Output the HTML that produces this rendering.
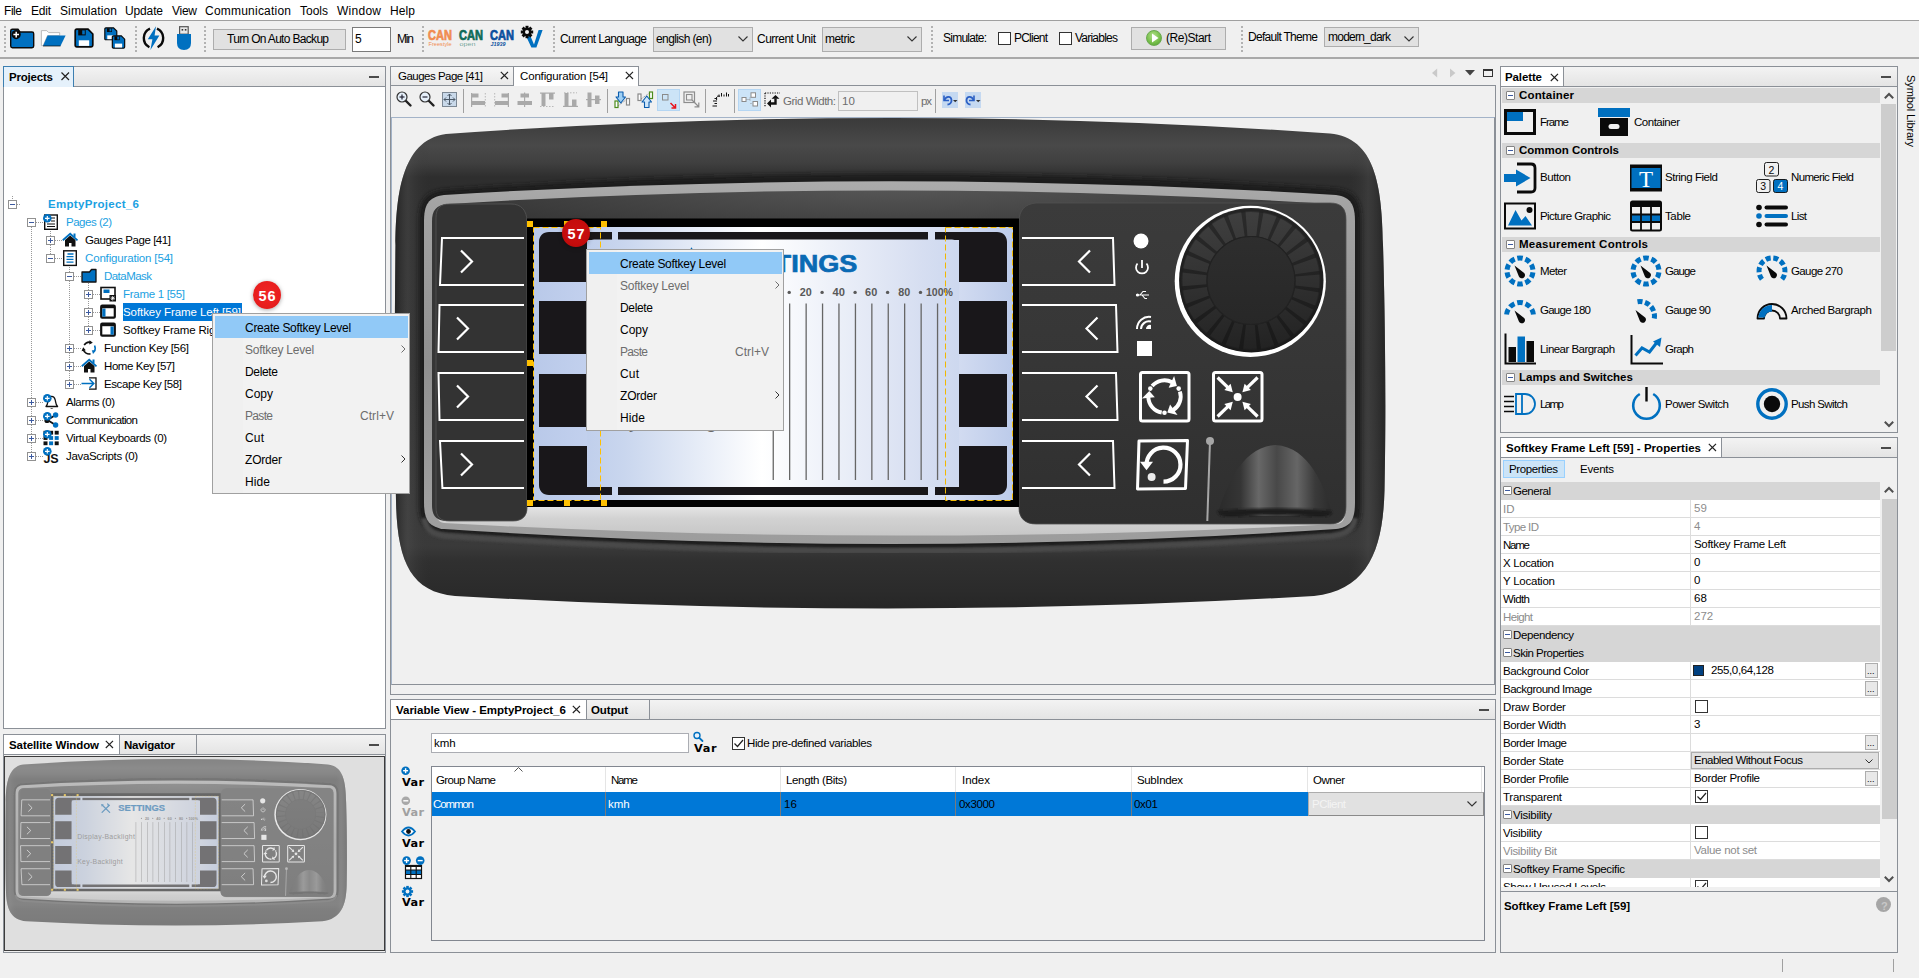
<!DOCTYPE html>
<html lang="en">
<head>
<meta charset="utf-8">
<title>HMI Designer - EmptyProject_6</title>
<style>
*{box-sizing:border-box;margin:0;padding:0}
html,body{width:1919px;height:978px;overflow:hidden;background:#f0f0f0;font-family:"Liberation Sans",sans-serif;font-size:11px;color:#000}
.a{position:absolute}
.t{position:absolute;white-space:pre}
.panel{position:absolute;border:1px solid #8b9097;background:#f0f0f0}
.hdr{position:absolute;left:0;top:0;right:0;height:20px;background:linear-gradient(#f3f3f3,#e4e4e4);border-bottom:1px solid #8b9097}
.tab{position:absolute;top:0;height:20px;background:#fff;border-right:1px solid #8b9097}
.grip{position:absolute;width:2px;top:26px;height:27px;background-image:linear-gradient(#b2b2b2 50%,transparent 50%);background-size:2px 4px}
.btn{position:absolute;background:#e1e1e1;border:1px solid #adadad}
.inp{position:absolute;background:#fff;border:1px solid #7a7a7a}
.cb{position:absolute;width:13px;height:13px;background:#fff;border:1px solid #333}
svg{position:absolute;overflow:visible}
</style>
</head>
<body>

<!-- top -->
<div class="sec" id="sec-top">
<div class="a" style="left:0;top:0;width:1919px;height:20px;background:#fff"></div>
<span class="t" style="letter-spacing:-0.45px;left:4px;top:5px;font-size:12px;line-height:12px;color:#000;">File</span>
<span class="t" style="letter-spacing:-0.23px;left:31px;top:5px;font-size:12px;line-height:12px;color:#000;">Edit</span>
<span class="t" style="letter-spacing:0.11px;left:60px;top:5px;font-size:12px;line-height:12px;color:#000;">Simulation</span>
<span class="t" style="letter-spacing:-0.14px;left:125px;top:5px;font-size:12px;line-height:12px;color:#000;">Update</span>
<span class="t" style="letter-spacing:-0.27px;left:172px;top:5px;font-size:12px;line-height:12px;color:#000;">View</span>
<span class="t" style="letter-spacing:0.22px;left:205px;top:5px;font-size:12px;line-height:12px;color:#000;">Communication</span>
<span class="t" style="letter-spacing:-0.0px;left:300px;top:5px;font-size:12px;line-height:12px;color:#000;">Tools</span>
<span class="t" style="letter-spacing:0.26px;left:337px;top:5px;font-size:12px;line-height:12px;color:#000;">Window</span>
<span class="t" style="letter-spacing:0.1px;left:390px;top:5px;font-size:12px;line-height:12px;color:#000;">Help</span>
<div class="a" style="left:0;top:20px;width:1919px;height:1px;background:#a0a0a0"></div>
<div class="a" style="left:0;top:21px;width:1919px;height:36px;background:#f0f0f0"></div>
<div class="a" style="left:0;top:57px;width:1919px;height:2px;background:#a9a9a9"></div>
<div class="grip" style="left:4px"></div>
<div class="grip" style="left:135px"></div>
<div class="grip" style="left:204px"></div>
<div class="grip" style="left:422px"></div>
<div class="grip" style="left:553px"></div>
<div class="grip" style="left:931px"></div>
<div class="grip" style="left:1241px"></div>
<div class="btn" style="left:213px;top:29px;width:133px;height:21px"></div>
<span class="t" style="letter-spacing:-0.68px;left:227px;top:33px;font-size:12px;line-height:12px;color:#000;">Turn On Auto Backup</span>
<div class="inp" style="left:352px;top:27px;width:39px;height:25px"></div>
<span class="t" style="left:355px;top:33px;font-size:12px;line-height:12px;color:#000;">5</span>
<span class="t" style="letter-spacing:-1.17px;left:397px;top:33px;font-size:12px;line-height:12px;color:#000;">Min</span>
<span class="t" style="letter-spacing:-0.65px;left:560px;top:33px;font-size:12px;line-height:12px;color:#000;">Current Language</span>
<div class="btn" style="left:653px;top:27px;width:100px;height:25px"></div>
<span class="t" style="letter-spacing:-0.61px;left:656px;top:33px;font-size:12px;line-height:12px;color:#000;">english (en)</span>
<span class="t" style="letter-spacing:-0.52px;left:757px;top:33px;font-size:12px;line-height:12px;color:#000;">Current Unit</span>
<div class="btn" style="left:822px;top:27px;width:100px;height:25px"></div>
<span class="t" style="letter-spacing:-0.53px;left:825px;top:33px;font-size:12px;line-height:12px;color:#000;">metric</span>
<span class="t" style="letter-spacing:-0.75px;left:943px;top:32px;font-size:12px;line-height:12px;color:#000;">Simulate:</span>
<div class="cb" style="left:998px;top:32px"></div>
<span class="t" style="letter-spacing:-0.78px;left:1014px;top:32px;font-size:12px;line-height:12px;color:#000;">PClient</span>
<div class="cb" style="left:1059px;top:32px"></div>
<span class="t" style="letter-spacing:-0.77px;left:1075px;top:32px;font-size:12px;line-height:12px;color:#000;">Variables</span>
<div class="btn" style="left:1131px;top:27px;width:95px;height:23px"></div>
<span class="t" style="letter-spacing:-0.46px;left:1166px;top:32px;font-size:12px;line-height:12px;color:#000;">(Re)Start</span>
<span class="t" style="letter-spacing:-0.71px;left:1248px;top:31px;font-size:12px;line-height:12px;color:#000;">Default Theme</span>
<div class="btn" style="left:1324px;top:27px;width:95px;height:20px"></div>
<span class="t" style="letter-spacing:-0.77px;left:1328px;top:31px;font-size:12px;line-height:12px;color:#000;">modern_dark</span>
<svg style="left:738px;top:36px" width="10" height="6"><path d="M0.5 0.5 L5 5 L9.5 0.5" fill="none" stroke="#333" stroke-width="1.1"/></svg>
<svg style="left:907px;top:36px" width="10" height="6"><path d="M0.5 0.5 L5 5 L9.5 0.5" fill="none" stroke="#333" stroke-width="1.1"/></svg>
<svg style="left:1404px;top:36px" width="10" height="6"><path d="M0.5 0.5 L5 5 L9.5 0.5" fill="none" stroke="#333" stroke-width="1.1"/></svg>
</div>
<!-- tbicons -->
<div class="sec" id="sec-tbicons">
<svg style="left:9px;top:27px" width="26" height="22" viewBox="0 0 26 22"><path d="M1.7 4 Q1.7 2.3 3.4 2.3 H9 L11 5 H23 Q24.7 5 24.7 6.7 V19 Q24.7 20.7 23 20.7 H3.4 Q1.7 20.7 1.7 19 Z" fill="#0070c0" stroke="#0a0a0a" stroke-width="1.4"/><circle cx="7.2" cy="7.6" r="4.6" fill="#0a0a0a"/><path d="M7.2 4.8 V10.4 M4.4 7.6 H10" stroke="#fff" stroke-width="1.5"/></svg>
<svg style="left:40px;top:29px" width="26" height="18" viewBox="0 0 26 18"><path d="M1.4 16.6 V1.6 H6.7 L8.7 3.6 H19.7 V6.6 H7.5 L3.2 16.6 Z" fill="#fff" stroke="#b4b4b4" stroke-width="0.9"/><path d="M7.6 6.6 H25.6 L20.5 16.9 H3 Z" fill="#0070c0"/><path d="M3 17 H20.5" stroke="#0a0a0a" stroke-width="0.7"/></svg>
<svg style="left:74px;top:28px" width="20" height="20" viewBox="0 0 20 20"><path d="M1.2 2.8 Q1.2 1.2 2.8 1.2 H14 L18.8 6 V17.2 Q18.8 18.8 17.2 18.8 H2.8 Q1.2 18.8 1.2 17.2 Z" fill="#0070c0" stroke="#0a0a0a" stroke-width="1.7"/><rect x="4.2" y="1.8" width="7.5" height="5.6" fill="#0a0a0a"/><rect x="8.2" y="2.4" width="2.6" height="4" fill="#0070c0"/><rect x="4.8" y="12.3" width="10.4" height="5.6" fill="#fff"/></svg>
<svg style="left:104px;top:27px" width="23" height="23" viewBox="0 0 23 23"><g transform="scale(0.68)"><path d="M1.2 2.8 Q1.2 1.2 2.8 1.2 H14 L18.8 6 V17.2 Q18.8 18.8 17.2 18.8 H2.8 Q1.2 18.8 1.2 17.2 Z" fill="#0070c0" stroke="#0a0a0a" stroke-width="1.7"/><rect x="4.2" y="1.8" width="7.5" height="5.6" fill="#0a0a0a"/><rect x="8.2" y="2.4" width="2.6" height="4" fill="#0070c0"/><rect x="4.8" y="12.3" width="10.4" height="5.6" fill="#fff"/></g><g transform="translate(7.5 8) scale(0.7)"><path d="M1.2 2.8 Q1.2 1.2 2.8 1.2 H14 L18.8 6 V17.2 Q18.8 18.8 17.2 18.8 H2.8 Q1.2 18.8 1.2 17.2 Z" fill="#0070c0" stroke="#0a0a0a" stroke-width="1.7"/><rect x="4.2" y="1.8" width="7.5" height="5.6" fill="#0a0a0a"/><rect x="8.2" y="2.4" width="2.6" height="4" fill="#0070c0"/><rect x="4.8" y="12.3" width="10.4" height="5.6" fill="#fff"/></g></svg>
<svg style="left:142px;top:26px" width="23" height="24" viewBox="0 0 23 24"><path d="M8 2.6 A10.3 10.3 0 0 0 7.4 21.2" fill="none" stroke="#0a0a0a" stroke-width="2.4"/><path d="M15 2.6 A10.3 10.3 0 0 1 15.6 21.2" fill="none" stroke="#0a0a0a" stroke-width="2.4"/><path d="M14 0.2 L5.8 13.2 H10.4 L8.4 24 L17.4 9.6 H12.6 Z" fill="#0070c0"/></svg>
<svg style="left:176px;top:26px" width="16" height="24" viewBox="0 0 16 24"><rect x="3.6" y="0.7" width="8.6" height="7.5" fill="#e8e8e8" stroke="#555" stroke-width="1.2"/><rect x="5.6" y="3" width="1.6" height="1.6" fill="#333"/><rect x="8.8" y="3" width="1.6" height="1.6" fill="#333"/><path d="M1 8 H15 V17 Q15 24 8 24 Q1 24 1 17 Z" fill="#0070c0"/></svg>
<div class="a" style="left:1146px;top:30px;width:16px;height:16px;border-radius:50%;background:radial-gradient(circle at 45% 35%,#b4e08c 0%,#78c04c 55%,#4c9a2c 100%);border:1px solid #6aa84f"></div>
<svg style="left:1151px;top:33px" width="8" height="10"><path d="M1 0.5 L7.5 5 L1 9.5 Z" fill="#fff"/></svg>
<svg style="left:0;top:0" width="600" height="60" viewBox="0 0 600 60"><text x="428" y="40.2" font-family="Liberation Sans, sans-serif" font-weight="bold" font-size="13.8" fill="#f08c50" textLength="24" lengthAdjust="spacingAndGlyphs" stroke="#f08c50" stroke-width="0.7">CAN</text><text x="428.6" y="45.8" font-family="Liberation Sans, sans-serif" font-size="5.6" fill="#f08c50" textLength="23" lengthAdjust="spacingAndGlyphs" >Freestyle</text><text x="459" y="40.2" font-family="Liberation Sans, sans-serif" font-weight="bold" font-size="13.8" fill="#0e6b58" textLength="24" lengthAdjust="spacingAndGlyphs" stroke="#0e6b58" stroke-width="0.7">CAN</text><text x="459.6" y="45.8" font-family="Liberation Sans, sans-serif" font-size="5.6" fill="#0e6b58" textLength="16" lengthAdjust="spacingAndGlyphs" fill-opacity="0.6">open</text><text x="490" y="40.2" font-family="Liberation Sans, sans-serif" font-weight="bold" font-size="13.8" fill="#0a4f9e" textLength="24" lengthAdjust="spacingAndGlyphs" stroke="#0a4f9e" stroke-width="0.7">CAN</text><text x="490.6" y="45.8" font-family="Liberation Sans, sans-serif" font-size="5.6" fill="#0a4f9e" textLength="15" lengthAdjust="spacingAndGlyphs" font-weight="bold" font-style="italic">J1939</text><path d="M526 36 L530.4 36 L534 44.5 L538.6 30 L542.6 30 L536.4 47.4 H531.4 Z" fill="#0070c0"/></svg>
<svg style="left:520px;top:25px" width="14" height="14" viewBox="-7 -7 14 14"><rect x="-1.5" y="-6.2" width="3" height="3.4" fill="#0a0a0a" transform="rotate(0)"/><rect x="-1.5" y="-6.2" width="3" height="3.4" fill="#0a0a0a" transform="rotate(45)"/><rect x="-1.5" y="-6.2" width="3" height="3.4" fill="#0a0a0a" transform="rotate(90)"/><rect x="-1.5" y="-6.2" width="3" height="3.4" fill="#0a0a0a" transform="rotate(135)"/><rect x="-1.5" y="-6.2" width="3" height="3.4" fill="#0a0a0a" transform="rotate(180)"/><rect x="-1.5" y="-6.2" width="3" height="3.4" fill="#0a0a0a" transform="rotate(225)"/><rect x="-1.5" y="-6.2" width="3" height="3.4" fill="#0a0a0a" transform="rotate(270)"/><rect x="-1.5" y="-6.2" width="3" height="3.4" fill="#0a0a0a" transform="rotate(315)"/><circle r="4.3" fill="#0a0a0a"/><circle r="2" fill="#f0f0f0"/></svg>
</div>
<!-- left -->
<div class="sec" id="sec-left">
<div class="panel" style="left:3px;top:66px;width:383px;height:663px;border-color:#8b9097;background:#fff"><div class="hdr"><div class="tab" style="left:0;width:71px;background:#e5f1fb;border:1px solid #3c7fb1;border-bottom:none;top:-1px;left:-1px;height:21px"></div></div></div>
<span class="t" style="letter-spacing:-0.2px;left:9px;top:72px;font-size:11.5px;line-height:11.5px;color:#000;font-weight:bold;">Projects</span>
<svg style="left:61px;top:72px" width="9" height="9"><path d="M0.5 0.5 L8 8 M8 0.5 L0.5 8" stroke="#222" stroke-width="1.2"/></svg>
<div class="a" style="left:369px;top:76px;width:10px;height:2px;background:#4a4a4a"></div>
<div class="a" style="left:12px;top:196px;width:1px;height:4px;background-image:linear-gradient(#999 50%,transparent 50%);background-size:1px 2px"></div>
<div class="a" style="left:31px;top:227px;width:1px;height:229px;background-image:linear-gradient(#999 50%,transparent 50%);background-size:1px 2px"></div>
<div class="a" style="left:50px;top:227px;width:1px;height:31px;background-image:linear-gradient(#999 50%,transparent 50%);background-size:1px 2px"></div>
<div class="a" style="left:69px;top:263px;width:1px;height:121px;background-image:linear-gradient(#999 50%,transparent 50%);background-size:1px 2px"></div>
<div class="a" style="left:88px;top:281px;width:1px;height:49px;background-image:linear-gradient(#999 50%,transparent 50%);background-size:1px 2px"></div>
<div class="a" style="left:123px;top:303px;width:119px;height:18px;background:#0078d7"></div>
<div class="a" style="left:17px;top:204px;width:3px;height:1px;background-image:linear-gradient(90deg,#999 50%,transparent 50%);background-size:2px 1px"></div>
<div class="a" style="left:8px;top:200px;width:9px;height:9px;border:1px solid #919191;background:#fff"></div>
<div class="a" style="left:10px;top:204px;width:5px;height:1px;background:#3c5aa0"></div>
<span class="t" style="letter-spacing:0.31px;left:48px;top:199px;font-size:11.5px;line-height:11.5px;color:#1ba1e2;font-weight:bold;">EmptyProject_6</span>
<div class="a" style="left:36px;top:222px;width:7px;height:1px;background-image:linear-gradient(90deg,#999 50%,transparent 50%);background-size:2px 1px"></div>
<div class="a" style="left:27px;top:218px;width:9px;height:9px;border:1px solid #919191;background:#fff"></div>
<div class="a" style="left:29px;top:222px;width:5px;height:1px;background:#3c5aa0"></div>
<span class="t" style="letter-spacing:-0.48px;left:66px;top:217px;font-size:11.5px;line-height:11.5px;color:#1ba1e2;">Pages (2)</span>
<div class="a" style="left:55px;top:240px;width:7px;height:1px;background-image:linear-gradient(90deg,#999 50%,transparent 50%);background-size:2px 1px"></div>
<div class="a" style="left:46px;top:236px;width:9px;height:9px;border:1px solid #919191;background:#fff"></div>
<div class="a" style="left:48px;top:240px;width:5px;height:1px;background:#3c5aa0"></div>
<div class="a" style="left:50px;top:238px;width:1px;height:5px;background:#3c5aa0"></div>
<span class="t" style="letter-spacing:-0.45px;left:85px;top:235px;font-size:11.5px;line-height:11.5px;color:#000;">Gauges Page [41]</span>
<div class="a" style="left:55px;top:258px;width:7px;height:1px;background-image:linear-gradient(90deg,#999 50%,transparent 50%);background-size:2px 1px"></div>
<div class="a" style="left:46px;top:254px;width:9px;height:9px;border:1px solid #919191;background:#fff"></div>
<div class="a" style="left:48px;top:258px;width:5px;height:1px;background:#3c5aa0"></div>
<span class="t" style="letter-spacing:-0.16px;left:85px;top:253px;font-size:11.5px;line-height:11.5px;color:#1ba1e2;">Configuration [54]</span>
<div class="a" style="left:74px;top:276px;width:7px;height:1px;background-image:linear-gradient(90deg,#999 50%,transparent 50%);background-size:2px 1px"></div>
<div class="a" style="left:65px;top:272px;width:9px;height:9px;border:1px solid #919191;background:#fff"></div>
<div class="a" style="left:67px;top:276px;width:5px;height:1px;background:#3c5aa0"></div>
<span class="t" style="letter-spacing:-0.54px;left:104px;top:271px;font-size:11.5px;line-height:11.5px;color:#1ba1e2;">DataMask</span>
<div class="a" style="left:93px;top:294px;width:7px;height:1px;background-image:linear-gradient(90deg,#999 50%,transparent 50%);background-size:2px 1px"></div>
<div class="a" style="left:84px;top:290px;width:9px;height:9px;border:1px solid #919191;background:#fff"></div>
<div class="a" style="left:86px;top:294px;width:5px;height:1px;background:#3c5aa0"></div>
<div class="a" style="left:88px;top:292px;width:1px;height:5px;background:#3c5aa0"></div>
<span class="t" style="letter-spacing:-0.29px;left:123px;top:289px;font-size:11.5px;line-height:11.5px;color:#1ba1e2;">Frame 1 [55]</span>
<div class="a" style="left:93px;top:312px;width:7px;height:1px;background-image:linear-gradient(90deg,#999 50%,transparent 50%);background-size:2px 1px"></div>
<div class="a" style="left:84px;top:308px;width:9px;height:9px;border:1px solid #919191;background:#fff"></div>
<div class="a" style="left:86px;top:312px;width:5px;height:1px;background:#3c5aa0"></div>
<div class="a" style="left:88px;top:310px;width:1px;height:5px;background:#3c5aa0"></div>
<span class="t" style="letter-spacing:-0.07px;left:123px;top:307px;font-size:11.5px;line-height:11.5px;color:#fff;">Softkey Frame Left [59]</span>
<div class="a" style="left:93px;top:330px;width:7px;height:1px;background-image:linear-gradient(90deg,#999 50%,transparent 50%);background-size:2px 1px"></div>
<div class="a" style="left:84px;top:326px;width:9px;height:9px;border:1px solid #919191;background:#fff"></div>
<div class="a" style="left:86px;top:330px;width:5px;height:1px;background:#3c5aa0"></div>
<div class="a" style="left:88px;top:328px;width:1px;height:5px;background:#3c5aa0"></div>
<span class="t" style="letter-spacing:-0.18px;left:123px;top:325px;font-size:11.5px;line-height:11.5px;color:#000;">Softkey Frame Right [60]</span>
<div class="a" style="left:74px;top:348px;width:7px;height:1px;background-image:linear-gradient(90deg,#999 50%,transparent 50%);background-size:2px 1px"></div>
<div class="a" style="left:65px;top:344px;width:9px;height:9px;border:1px solid #919191;background:#fff"></div>
<div class="a" style="left:67px;top:348px;width:5px;height:1px;background:#3c5aa0"></div>
<div class="a" style="left:69px;top:346px;width:1px;height:5px;background:#3c5aa0"></div>
<span class="t" style="letter-spacing:-0.28px;left:104px;top:343px;font-size:11.5px;line-height:11.5px;color:#000;">Function Key [56]</span>
<div class="a" style="left:74px;top:366px;width:7px;height:1px;background-image:linear-gradient(90deg,#999 50%,transparent 50%);background-size:2px 1px"></div>
<div class="a" style="left:65px;top:362px;width:9px;height:9px;border:1px solid #919191;background:#fff"></div>
<div class="a" style="left:67px;top:366px;width:5px;height:1px;background:#3c5aa0"></div>
<div class="a" style="left:69px;top:364px;width:1px;height:5px;background:#3c5aa0"></div>
<span class="t" style="letter-spacing:-0.42px;left:104px;top:361px;font-size:11.5px;line-height:11.5px;color:#000;">Home Key [57]</span>
<div class="a" style="left:74px;top:384px;width:7px;height:1px;background-image:linear-gradient(90deg,#999 50%,transparent 50%);background-size:2px 1px"></div>
<div class="a" style="left:65px;top:380px;width:9px;height:9px;border:1px solid #919191;background:#fff"></div>
<div class="a" style="left:67px;top:384px;width:5px;height:1px;background:#3c5aa0"></div>
<div class="a" style="left:69px;top:382px;width:1px;height:5px;background:#3c5aa0"></div>
<span class="t" style="letter-spacing:-0.41px;left:104px;top:379px;font-size:11.5px;line-height:11.5px;color:#000;">Escape Key [58]</span>
<div class="a" style="left:36px;top:402px;width:7px;height:1px;background-image:linear-gradient(90deg,#999 50%,transparent 50%);background-size:2px 1px"></div>
<div class="a" style="left:27px;top:398px;width:9px;height:9px;border:1px solid #919191;background:#fff"></div>
<div class="a" style="left:29px;top:402px;width:5px;height:1px;background:#3c5aa0"></div>
<div class="a" style="left:31px;top:400px;width:1px;height:5px;background:#3c5aa0"></div>
<span class="t" style="letter-spacing:-0.45px;left:66px;top:397px;font-size:11.5px;line-height:11.5px;color:#000;">Alarms (0)</span>
<div class="a" style="left:36px;top:420px;width:7px;height:1px;background-image:linear-gradient(90deg,#999 50%,transparent 50%);background-size:2px 1px"></div>
<div class="a" style="left:27px;top:416px;width:9px;height:9px;border:1px solid #919191;background:#fff"></div>
<div class="a" style="left:29px;top:420px;width:5px;height:1px;background:#3c5aa0"></div>
<div class="a" style="left:31px;top:418px;width:1px;height:5px;background:#3c5aa0"></div>
<span class="t" style="letter-spacing:-0.66px;left:66px;top:415px;font-size:11.5px;line-height:11.5px;color:#000;">Communication</span>
<div class="a" style="left:36px;top:438px;width:7px;height:1px;background-image:linear-gradient(90deg,#999 50%,transparent 50%);background-size:2px 1px"></div>
<div class="a" style="left:27px;top:434px;width:9px;height:9px;border:1px solid #919191;background:#fff"></div>
<div class="a" style="left:29px;top:438px;width:5px;height:1px;background:#3c5aa0"></div>
<div class="a" style="left:31px;top:436px;width:1px;height:5px;background:#3c5aa0"></div>
<span class="t" style="letter-spacing:-0.34px;left:66px;top:433px;font-size:11.5px;line-height:11.5px;color:#000;">Virtual Keyboards (0)</span>
<div class="a" style="left:36px;top:456px;width:7px;height:1px;background-image:linear-gradient(90deg,#999 50%,transparent 50%);background-size:2px 1px"></div>
<div class="a" style="left:27px;top:452px;width:9px;height:9px;border:1px solid #919191;background:#fff"></div>
<div class="a" style="left:29px;top:456px;width:5px;height:1px;background:#3c5aa0"></div>
<div class="a" style="left:31px;top:454px;width:1px;height:5px;background:#3c5aa0"></div>
<span class="t" style="letter-spacing:-0.33px;left:66px;top:451px;font-size:11.5px;line-height:11.5px;color:#000;">JavaScripts (0)</span>
</div>
<!-- treeicons -->
<div class="sec" id="sec-treeicons">
<svg style="left:43px;top:214px" width="16" height="16" viewBox="0 0 16 16"><rect x="1.7" y="1" width="12.6" height="14.3" fill="#fff" stroke="#111" stroke-width="1.4"/><path d="M8 4 H12 M8 7 H12 M4 10 H12 M4 12.5 H12" stroke="#111" stroke-width="1.2"/><circle cx="4.3" cy="4.3" r="4.3" fill="#0070c0"/><path d="M4.3 2 V6.6 M2 4.3 H6.6" stroke="#fff" stroke-width="1.15"/></svg>
<svg style="left:62px;top:232px" width="16" height="16" viewBox="0 0 16 16"><path d="M3 8 V14.5 H7 V11 H9.5 V14.5 H13.5 V8 L8.2 3.5 Z" fill="#111"/><path d="M0.8 8.3 L8.2 1.8 L15.5 8.3" fill="none" stroke="#0070c0" stroke-width="1.8"/><rect x="11.5" y="1.5" width="2" height="3.5" fill="#0070c0"/></svg>
<svg style="left:81px;top:358px" width="16" height="16" viewBox="0 0 16 16"><path d="M3 8 V14.5 H7 V11 H9.5 V14.5 H13.5 V8 L8.2 3.5 Z" fill="#111"/><path d="M0.8 8.3 L8.2 1.8 L15.5 8.3" fill="none" stroke="#0070c0" stroke-width="1.8"/><rect x="11.5" y="1.5" width="2" height="3.5" fill="#0070c0"/></svg>
<svg style="left:62px;top:250px" width="16" height="16" viewBox="0 0 16 16"><rect x="1.7" y="0.8" width="12.6" height="14.6" fill="#fff" stroke="#111" stroke-width="1.4"/><path d="M5.5 4 H11.5 M4.5 6.7 H11.5 M4.5 9.4 H11.5 M4.5 12.1 H11.5" stroke="#0070c0" stroke-width="1.3"/></svg>
<svg style="left:81px;top:268px" width="16" height="16" viewBox="0 0 16 16"><path d="M1 4 H8.5 L10.5 1.5 H15 V14 H1 Z" fill="#0070c0" stroke="#111" stroke-width="1.3" stroke-linejoin="round"/></svg>
<svg style="left:100px;top:286px" width="16" height="16" viewBox="0 0 16 16"><rect x="1" y="1.5" width="14" height="11.5" fill="#fff" stroke="#111" stroke-width="1.6"/><rect x="3.5" y="3.5" width="6" height="3.5" fill="#0070c0"/><rect x="9.5" y="9" width="6.5" height="6.5" fill="#111"/><path d="M12.7 10 V14.5 M10.5 12.2 H15 M11.2 10.7 L14.3 13.8 M14.3 10.7 L11.2 13.8" stroke="#fff" stroke-width="0.8"/></svg>
<svg style="left:100px;top:304px" width="16" height="16" viewBox="0 0 16 16"><rect x="1.2" y="1.7" width="13.6" height="12" rx="1" fill="#fff" stroke="#111" stroke-width="2.2"/><rect x="2.3" y="4.5" width="3.2" height="8.2" fill="#0070c0"/><rect x="1.2" y="1.2" width="13.6" height="3" fill="#111"/></svg>
<svg style="left:100px;top:322px" width="16" height="16" viewBox="0 0 16 16"><rect x="1.2" y="1.7" width="13.6" height="12" rx="1" fill="#fff" stroke="#111" stroke-width="2.2"/><rect x="10.5" y="4.5" width="3.2" height="8.2" fill="#0070c0"/><rect x="1.2" y="1.2" width="13.6" height="3" fill="#111"/></svg>
<svg style="left:81px;top:340px" width="16" height="16" viewBox="0 0 16 16"><path d="M3.2 5.2 A6 6 0 0 1 10 2.4" fill="none" stroke="#111" stroke-width="1.6"/><path d="M8.5 0.3 L11.8 2.8 L8.2 4.6 Z" fill="#111"/><path d="M13.6 5.5 A6 6 0 0 1 12.8 11.8" fill="none" stroke="#0070c0" stroke-width="1.6"/><path d="M15 10.5 L12 14 L10.8 10.3 Z" fill="#0070c0"/><path d="M9.5 13.8 A6 6 0 0 1 2.3 9.5" fill="none" stroke="#111" stroke-width="1.6"/><path d="M0.5 11.2 L2.2 7.2 L4.8 10.3 Z" fill="#111"/></svg>
<svg style="left:81px;top:376px" width="16" height="16" viewBox="0 0 16 16"><path d="M8 1.8 H15 V13.2 H8" fill="none" stroke="#111" stroke-width="1.3"/><path d="M0.5 7.5 H12.5 M8.5 3.3 L12.8 7.5 L8.5 11.7" fill="none" stroke="#0070c0" stroke-width="1.5"/></svg>
<svg style="left:43px;top:394px" width="16" height="16" viewBox="0 0 16 16"><path d="M3 12.5 C5 10.5 4.6 8 5.2 5.8 C5.8 3.4 7.2 2.4 8.7 2.4 C10.3 2.4 11.6 3.4 12.2 5.8 C12.8 8 12.4 10.5 14.6 12.5 Z" fill="#fff" stroke="#111" stroke-width="1.3" stroke-linejoin="round"/><path d="M7 14.2 Q8.7 15.8 10.4 14.2 Z" fill="#111"/><circle cx="4.3" cy="4.3" r="4.3" fill="#0070c0"/><path d="M4.3 2 V6.6 M2 4.3 H6.6" stroke="#fff" stroke-width="1.15"/></svg>
<svg style="left:43px;top:412px" width="16" height="16" viewBox="0 0 16 16"><path d="M12.5 3 L4.5 8 L12.5 13" fill="none" stroke="#111" stroke-width="1.8"/><circle cx="12.6" cy="3" r="2.7" fill="#0070c0"/><circle cx="12.6" cy="13" r="2.7" fill="#0070c0"/><circle cx="4" cy="8.5" r="2.6" fill="#111"/><circle cx="4.3" cy="4.3" r="4.3" fill="#0070c0"/><path d="M4.3 2 V6.6 M2 4.3 H6.6" stroke="#fff" stroke-width="1.15"/></svg>
<svg style="left:43px;top:430px" width="16" height="16" viewBox="0 0 16 16"><rect x="0.5" y="0.8" width="4" height="3.8" fill="#111"/><rect x="6.1" y="0.8" width="4" height="3.8" fill="#111"/><rect x="11.7" y="0.8" width="4" height="3.8" fill="#111"/><rect x="0.5" y="6.1" width="4" height="3.8" fill="#111"/><rect x="6.1" y="6.1" width="4" height="3.8" fill="#0070c0"/><rect x="11.7" y="6.1" width="4" height="3.8" fill="#0070c0"/><rect x="0.5" y="11.4" width="4" height="3.8" fill="#111"/><rect x="6.1" y="11.4" width="4" height="3.8" fill="#0070c0"/><rect x="11.7" y="11.4" width="4" height="3.8" fill="#111"/><circle cx="4.3" cy="4.3" r="4.3" fill="#0070c0"/><path d="M4.3 2 V6.6 M2 4.3 H6.6" stroke="#fff" stroke-width="1.15"/></svg>
<svg style="left:43px;top:447px" width="16" height="16" viewBox="0 0 16 16"><text x="0.5" y="15.5" font-family="Liberation Sans, sans-serif" font-weight="bold" font-size="12.5" fill="#111" textLength="15">JS</text><circle cx="4.3" cy="4.3" r="4.3" fill="#0070c0"/><path d="M4.3 2 V6.6 M2 4.3 H6.6" stroke="#fff" stroke-width="1.15"/></svg>
</div>
<!-- center -->
<div class="sec" id="sec-center">
<div class="a" style="left:390px;top:85px;width:1106px;height:610px;background:#f0f0f0;border:1px solid #8b9097"></div>
<div class="a" style="left:390px;top:66px;width:124px;height:20px;background:linear-gradient(#f6f6f6,#e9e9e9);border:1px solid #8b9097"></div>
<div class="a" style="left:513px;top:66px;width:126px;height:20px;background:#fff;border:1px solid #8b9097;border-bottom:none"></div>
<span class="t" style="letter-spacing:-0.51px;left:398px;top:71px;font-size:11.5px;line-height:11.5px;color:#000;">Gauges Page [41]</span>
<span class="t" style="letter-spacing:-0.16px;left:520px;top:71px;font-size:11.5px;line-height:11.5px;color:#000;">Configuration [54]</span>
<svg style="left:500px;top:71px" width="9" height="9"><path d="M0.8 0.8 L8 8 M8 0.8 L0.8 8" stroke="#222" stroke-width="1.15"/></svg>
<svg style="left:625px;top:71px" width="9" height="9"><path d="M0.8 0.8 L8 8 M8 0.8 L0.8 8" stroke="#222" stroke-width="1.15"/></svg>
<svg style="left:1430px;top:66px" width="66" height="14"><path d="M7.2 2.4 L2 7 L7.2 11.6 Z" fill="#c9c9c9"/><path d="M20 2.4 L25.4 7 L20 11.6 Z" fill="#c9c9c9"/><path d="M35 4 L45 4 L40 9.5 Z" fill="#444"/><rect x="53.5" y="3.5" width="9" height="7" fill="none" stroke="#333"/><rect x="53" y="3" width="10" height="2" fill="#333"/></svg>
<div class="a" style="left:391px;top:86px;width:1104px;height:31px;background:#f0f0f0"></div>
<div class="a" style="left:391px;top:117px;width:1104px;height:568px;background:#f0f0f0;border:1px solid #8b9097;border-top-color:#a3b3c8;border-left-color:#a3b3c8"></div>
<div class="a" style="left:463px;top:89px;width:1px;height:24px;background:#a0a0a0"></div>
<div class="a" style="left:607px;top:89px;width:1px;height:24px;background:#a0a0a0"></div>
<div class="a" style="left:705px;top:89px;width:1px;height:24px;background:#a0a0a0"></div>
<div class="a" style="left:734px;top:89px;width:1px;height:24px;background:#a0a0a0"></div>
<div class="a" style="left:935px;top:89px;width:1px;height:24px;background:#a0a0a0"></div>
<div class="a" style="left:657px;top:89px;width:23px;height:22px;background:#cce4f7;border:1px solid #b5d6f3"></div>
<div class="a" style="left:738px;top:89px;width:23px;height:22px;background:#cce4f7;border:1px solid #b5d6f3"></div>
<span class="t" style="letter-spacing:-0.45px;left:783px;top:96px;font-size:11.5px;line-height:11.5px;color:#6d6d6d;">Grid Width:</span>
<div class="inp" style="left:838px;top:91px;width:80px;height:20px;background:#f0f0f0;border-color:#c0c0c0"></div>
<span class="t" style="left:842px;top:96px;font-size:11.5px;line-height:11.5px;color:#6d6d6d;">10</span>
<span class="t" style="letter-spacing:-1.16px;left:921px;top:96px;font-size:11.5px;line-height:11.5px;color:#6d6d6d;">px</span>
<div class="panel" style="left:390px;top:699px;width:1106px;height:254px"><div class="hdr"></div></div>
<div class="a" style="left:391px;top:700px;width:196px;height:19px;background:#fff;border-right:1px solid #8b9097"></div>
<div class="a" style="left:587px;top:700px;width:63px;height:19px;border-right:1px solid #8b9097"></div>
<span class="t" style="letter-spacing:-0.02px;left:396px;top:705px;font-size:11.5px;line-height:11.5px;color:#000;font-weight:bold;">Variable View - EmptyProject_6</span>
<svg style="left:572px;top:705px" width="9" height="9"><path d="M0.8 0.8 L8 8 M8 0.8 L0.8 8" stroke="#222" stroke-width="1.15"/></svg>
<span class="t" style="letter-spacing:-0.14px;left:591px;top:705px;font-size:11.5px;line-height:11.5px;color:#000;font-weight:bold;">Output</span>
<div class="a" style="left:1479px;top:709px;width:10px;height:2px;background:#4a4a4a"></div>
<div class="inp" style="left:431px;top:733px;width:258px;height:20px;border-color:#abadb3"></div>
<span class="t" style="left:434px;top:738px;font-size:11.5px;line-height:11.5px;color:#000;">kmh</span>
<span class="t" style="letter-spacing:0.59px;left:694px;top:743px;font-size:11.3px;line-height:11.3px;color:#000;font-weight:bold;font-family:'DejaVu Sans','Liberation Sans',sans-serif;">Var</span>
<div class="cb" style="left:732px;top:737px"></div>
<svg style="left:733px;top:738px" width="11" height="11"><path d="M1.5 5.5 L4.5 8.5 L10 2" fill="none" stroke="#222" stroke-width="1.2"/></svg>
<span class="t" style="letter-spacing:-0.37px;left:747px;top:738px;font-size:11.5px;line-height:11.5px;color:#000;">Hide pre-defined variables</span>
<div class="a" style="left:431px;top:766px;width:1054px;height:175px;border:1px solid #828790;background:#f0f0f0"></div>
<div class="a" style="left:432px;top:767px;width:1052px;height:25px;background:#fff"></div>
<span class="t" style="letter-spacing:-0.65px;left:436px;top:775px;font-size:11.5px;line-height:11.5px;color:#000;">Group Name</span>
<span class="t" style="letter-spacing:-1.23px;left:611px;top:775px;font-size:11.5px;line-height:11.5px;color:#000;">Name</span>
<span class="t" style="letter-spacing:-0.35px;left:786px;top:775px;font-size:11.5px;line-height:11.5px;color:#000;">Length (Bits)</span>
<span class="t" style="letter-spacing:-0.04px;left:962px;top:775px;font-size:11.5px;line-height:11.5px;color:#000;">Index</span>
<span class="t" style="letter-spacing:-0.37px;left:1137px;top:775px;font-size:11.5px;line-height:11.5px;color:#000;">SubIndex</span>
<span class="t" style="letter-spacing:-0.47px;left:1313px;top:775px;font-size:11.5px;line-height:11.5px;color:#000;">Owner</span>
<div class="a" style="left:605px;top:767px;width:1px;height:25px;background:#e5e5e5"></div>
<div class="a" style="left:780px;top:767px;width:1px;height:25px;background:#e5e5e5"></div>
<div class="a" style="left:955px;top:767px;width:1px;height:25px;background:#e5e5e5"></div>
<div class="a" style="left:1131px;top:767px;width:1px;height:25px;background:#e5e5e5"></div>
<div class="a" style="left:1307px;top:767px;width:1px;height:25px;background:#e5e5e5"></div>
<div class="a" style="left:1481px;top:767px;width:1px;height:25px;background:#e5e5e5"></div>
<svg style="left:514px;top:767px" width="9" height="5"><path d="M0.5 4.5 L4.5 0.5 L8.5 4.5" fill="none" stroke="#555" stroke-width="1"/></svg>
<div class="a" style="left:432px;top:792px;width:876px;height:24px;background:#0078d7"></div>
<div class="a" style="left:605px;top:792px;width:1px;height:24px;background:#7a7a7a"></div>
<div class="a" style="left:780px;top:792px;width:1px;height:24px;background:#7a7a7a"></div>
<div class="a" style="left:955px;top:792px;width:1px;height:24px;background:#7a7a7a"></div>
<div class="a" style="left:1131px;top:792px;width:1px;height:24px;background:#7a7a7a"></div>
<span class="t" style="letter-spacing:-1.13px;left:433px;top:799px;font-size:11.5px;line-height:11.5px;color:#fff;">Common</span>
<span class="t" style="left:608px;top:799px;font-size:11.5px;line-height:11.5px;color:#fff;">kmh</span>
<span class="t" style="left:784px;top:799px;font-size:11.5px;line-height:11.5px;color:#000;">16</span>
<span class="t" style="letter-spacing:-0.35px;left:959px;top:799px;font-size:11.5px;line-height:11.5px;color:#000;">0x3000</span>
<span class="t" style="letter-spacing:-0.31px;left:1134px;top:799px;font-size:11.5px;line-height:11.5px;color:#000;">0x01</span>
<div class="a" style="left:1308px;top:792px;width:176px;height:24px;background:#e1e1e1;border:1px solid #adadad;border-right-color:#8a8a8a;border-bottom-color:#8a8a8a"></div>
<span class="t" style="letter-spacing:-0.51px;left:1312px;top:799px;font-size:11.5px;line-height:11.5px;color:#f4f4f4;">PClient</span>
<svg style="left:1467px;top:801px" width="10" height="6"><path d="M0.5 0.5 L5 5 L9.5 0.5" fill="none" stroke="#333" stroke-width="1.1"/></svg>
<svg style="left:0;top:0" width="760" height="960" viewBox="0 0 760 960"><circle cx="405.6" cy="770.7" r="4.3" fill="#0070c0"/><path d="M403.1 770.7 H408.1" stroke="#fff" stroke-width="1.4"/><path d="M405.6 768.2 V773.2" stroke="#fff" stroke-width="1.4"/><circle cx="405.8" cy="800.8" r="4.3" fill="#a8a8a8"/><path d="M403.3 800.8 H408.3" stroke="#fff" stroke-width="1.4"/><path d="M402 831.5 Q408.5 823.5 415 831.5 Q408.5 839.5 402 831.5 Z" fill="#fff" stroke="#0070c0" stroke-width="1.8"/><circle cx="408.5" cy="831.5" r="2.4" fill="#111"/><rect x="405.5" y="865.5" width="16" height="13" fill="#fff" stroke="#111" stroke-width="1.2"/><rect x="406" y="870" width="15" height="4.5" fill="#0070c0"/><path d="M405.5 870 H421.5 M405.5 874.5 H421.5 M410.8 865.5 V878.5 M416.2 865.5 V878.5" stroke="#111" stroke-width="1.1"/><rect x="405" y="865" width="17" height="2" fill="#111"/><circle cx="406.6" cy="860.6" r="4.3" fill="#0070c0"/><path d="M404.1 860.6 H409.1" stroke="#fff" stroke-width="1.4"/><path d="M406.6 858.1 V863.1" stroke="#fff" stroke-width="1.4"/><circle cx="420.2" cy="860.6" r="4.3" fill="#0070c0"/><path d="M417.7 860.6 H422.7" stroke="#fff" stroke-width="1.4"/><rect x="-1.3" y="-5.6" width="2.6" height="3" fill="#0070c0" transform="translate(407.5 891.5) rotate(0)"/><rect x="-1.3" y="-5.6" width="2.6" height="3" fill="#0070c0" transform="translate(407.5 891.5) rotate(45)"/><rect x="-1.3" y="-5.6" width="2.6" height="3" fill="#0070c0" transform="translate(407.5 891.5) rotate(90)"/><rect x="-1.3" y="-5.6" width="2.6" height="3" fill="#0070c0" transform="translate(407.5 891.5) rotate(135)"/><rect x="-1.3" y="-5.6" width="2.6" height="3" fill="#0070c0" transform="translate(407.5 891.5) rotate(180)"/><rect x="-1.3" y="-5.6" width="2.6" height="3" fill="#0070c0" transform="translate(407.5 891.5) rotate(225)"/><rect x="-1.3" y="-5.6" width="2.6" height="3" fill="#0070c0" transform="translate(407.5 891.5) rotate(270)"/><rect x="-1.3" y="-5.6" width="2.6" height="3" fill="#0070c0" transform="translate(407.5 891.5) rotate(315)"/><circle cx="407.5" cy="891.5" r="3.9" fill="#0070c0"/><circle cx="407.5" cy="891.5" r="1.9" fill="#f0f0f0"/><circle cx="697" cy="735.5" r="3" fill="#e8f2fb" stroke="#0070c0" stroke-width="1.4"/><path d="M699.3 737.8 L702.5 741" stroke="#0070c0" stroke-width="1.8" stroke-linecap="round"/></svg>
<span class="t" style="letter-spacing:0.34px;left:402px;top:776.5px;font-size:11.3px;line-height:11.3px;color:#000;font-weight:bold;font-family:'DejaVu Sans','Liberation Sans',sans-serif;">Var</span>
<span class="t" style="letter-spacing:0.34px;left:402px;top:806.5px;font-size:11.3px;line-height:11.3px;color:#a0a0a0;font-weight:bold;font-family:'DejaVu Sans','Liberation Sans',sans-serif;">Var</span>
<span class="t" style="letter-spacing:0.34px;left:402px;top:838px;font-size:11.3px;line-height:11.3px;color:#000;font-weight:bold;font-family:'DejaVu Sans','Liberation Sans',sans-serif;">Var</span>
<span class="t" style="letter-spacing:0.34px;left:402px;top:897px;font-size:11.3px;line-height:11.3px;color:#000;font-weight:bold;font-family:'DejaVu Sans','Liberation Sans',sans-serif;">Var</span>
</div>
<!-- edicons -->
<div class="sec" id="sec-edicons">
<svg style="left:396px;top:91px" width="16" height="17" viewBox="0 0 16 17"><path d="M9.5 9.5 L14.5 14.5" stroke="#222" stroke-width="2.4" stroke-linecap="round"/><circle cx="6" cy="6" r="5" fill="#e6f0fa" stroke="#333" stroke-width="1.2"/><path d="M3.5 6 H8.5" stroke="#223" stroke-width="1.2"/><path d="M6 3.5 V8.5" stroke="#223" stroke-width="1.2"/></svg>
<svg style="left:419px;top:91px" width="16" height="17" viewBox="0 0 16 17"><path d="M9.5 9.5 L14.5 14.5" stroke="#222" stroke-width="2.4" stroke-linecap="round"/><circle cx="6" cy="6" r="5" fill="#e6f0fa" stroke="#333" stroke-width="1.2"/><path d="M3.5 6 H8.5" stroke="#223" stroke-width="1.2"/></svg>
<svg style="left:442px;top:92px" width="15" height="15" viewBox="0 0 15 15"><rect x="0.5" y="0.5" width="14" height="14" fill="#c9d9ea" stroke="#7c8894"/><path d="M7.5 2 V13 M2 7.5 H13 M5.5 4 L7.5 2 L9.5 4 M5.5 11 L7.5 13 L9.5 11 M4 5.5 L2 7.5 L4 9.5 M11 5.5 L13 7.5 L11 9.5" fill="none" stroke="#4a5866" stroke-width="1"/></svg>
<svg style="left:471px;top:92px" width="15" height="15" viewBox="0 0 15 15"><rect x="0" y="1" width="1.2" height="14" fill="#a9a9a9"/><rect x="1" y="1.5" width="6.5" height="4" fill="#a9a9a9"/><rect x="1" y="9" width="13" height="4" fill="#a9a9a9"/><path d="M14.3 1 V15" stroke="#a9a9a9" stroke-width="0.8" stroke-dasharray="1.5 1.5"/></svg>
<svg style="left:494px;top:92px" width="15" height="15" viewBox="0 0 15 15"><rect x="13.8" y="1" width="1.2" height="14" fill="#a9a9a9"/><rect x="7.5" y="1.5" width="6.5" height="4" fill="#a9a9a9"/><rect x="1" y="9" width="13" height="4" fill="#a9a9a9"/><path d="M0.7 1 V15" stroke="#a9a9a9" stroke-width="0.8" stroke-dasharray="1.5 1.5"/></svg>
<svg style="left:517px;top:92px" width="15" height="15" viewBox="0 0 15 15"><rect x="7" y="0.5" width="1.2" height="14.5" fill="#a9a9a9"/><rect x="3.5" y="1.5" width="8.5" height="4" fill="#a9a9a9"/><rect x="0.5" y="9" width="14.5" height="4" fill="#a9a9a9"/></svg>
<svg style="left:540px;top:92px" width="15" height="15" viewBox="0 0 15 15"><rect x="0" y="0.5" width="15" height="1.2" fill="#a9a9a9"/><rect x="1.5" y="1" width="4" height="13" fill="#a9a9a9"/><rect x="9" y="1" width="4.5" height="6.5" fill="#a9a9a9"/><path d="M0 14.5 H14" stroke="#a9a9a9" stroke-width="0.8" stroke-dasharray="1.5 1.5"/></svg>
<svg style="left:563px;top:92px" width="15" height="15" viewBox="0 0 15 15"><rect x="0" y="13.8" width="15" height="1.2" fill="#a9a9a9"/><rect x="1.5" y="1" width="4" height="13" fill="#a9a9a9"/><rect x="9" y="7.5" width="4.5" height="6.5" fill="#a9a9a9"/><path d="M1 0.8 H14" stroke="#a9a9a9" stroke-width="0.8" stroke-dasharray="1.5 1.5"/></svg>
<svg style="left:586px;top:92px" width="15" height="15" viewBox="0 0 15 15"><rect x="0" y="7" width="15" height="1.2" fill="#a9a9a9"/><rect x="1.5" y="0.5" width="4" height="14.5" fill="#a9a9a9"/><rect x="9" y="3.5" width="4.5" height="8.5" fill="#a9a9a9"/></svg>
<svg style="left:614px;top:91px" width="17" height="18" viewBox="0 0 17 18"><rect x="1" y="10" width="3" height="6.5" fill="#fff" stroke="#4c8c1c" stroke-width="1.2"/><rect x="12.5" y="7.5" width="3" height="6.5" fill="#fff" stroke="#8a8a8a" stroke-width="1.2"/><path d="M4 15 L12.5 8.5" stroke="#666" stroke-width="0.7" stroke-dasharray="1 1"/><path d="M4.5 1 H9 V6 H11.5 L6.8 12 L2 6 H4.5 Z" fill="#9fd0f5" stroke="#0b5cad" stroke-width="1.1" stroke-linejoin="round"/></svg>
<svg style="left:637px;top:91px" width="17" height="18" viewBox="0 0 17 18"><rect x="1" y="3" width="3" height="6.5" fill="#fff" stroke="#8a8a8a" stroke-width="1.2"/><rect x="12.5" y="1" width="3" height="6.5" fill="#fff" stroke="#4c8c1c" stroke-width="1.2"/><path d="M4 8 L12.5 2" stroke="#666" stroke-width="0.7" stroke-dasharray="1 1"/><path d="M7.5 16.5 H12 V11 H14.5 L9.8 5 L5 11 H7.5 Z" fill="#cfe6fa" stroke="#0b5cad" stroke-width="1.1" stroke-linejoin="round"/></svg>
<svg style="left:660px;top:92px" width="18" height="18" viewBox="0 0 18 18"><rect x="2.5" y="2.5" width="5.5" height="5.5" fill="none" stroke="#8a8a8a" stroke-width="1"/><path d="M10.5 11 L15.5 16 M11.5 16 H15.5 V12" fill="none" stroke="#e8141c" stroke-width="1.5"/></svg>
<svg style="left:683px;top:91px" width="17" height="18" viewBox="0 0 17 18"><rect x="1" y="1" width="10.5" height="10.5" fill="none" stroke="#8c8c8c" stroke-width="1.2"/><rect x="3.5" y="3.5" width="5.5" height="5.5" fill="none" stroke="#8c8c8c" stroke-width="1.1"/><path d="M9 9 L15.5 15.5 M11.5 15.8 H15.8 V11.5" fill="none" stroke="#8c8c8c" stroke-width="1.2"/></svg>
<svg style="left:712px;top:92px" width="17" height="16" viewBox="0 0 17 16"><path d="M5 3.5 H16 M3.5 5 V16" stroke="#111" stroke-width="0" /><path d="M7 2.5 V4.5 M9.5 1 V4.5 M12 2.5 V4.5 M14.5 0.5 V4.5 M16.5 2 V4.5" stroke="#111" stroke-width="1"/><path d="M5 4.2 H8" stroke="#111" stroke-width="1"/><path d="M2.5 6.5 H5 M1 9 H5 M2.5 11.5 H5 M0.5 14 H5 M4.6 5 V8" stroke="#111" stroke-width="1"/></svg>
<svg style="left:741px;top:92px" width="18" height="18" viewBox="0 0 18 18"><rect x="1" y="5.5" width="4" height="4" fill="#fff" stroke="#8a8a8a" stroke-width="1"/><rect x="10" y="0.8" width="4.5" height="4.5" fill="#fff" stroke="#8a8a8a" stroke-width="1"/><rect x="12" y="9.5" width="4.5" height="4.5" fill="#fff" stroke="#8a8a8a" stroke-width="1"/><path d="M5.5 7.5 H9 M9 5.5 V9.5 M9.5 11.5 H11.5" stroke="#8a8a8a" stroke-width="0.9" stroke-dasharray="1 1"/></svg>
<svg style="left:764px;top:92px" width="17" height="16" viewBox="0 0 17 16"><path d="M1 1 H16 M1 1 V15" fill="none" stroke="#111" stroke-width="1.2" stroke-dasharray="1.2 1.2"/><path d="M11.5 6.5 V11.5 H6.5" fill="none" stroke="#111" stroke-width="2.4"/><path d="M7.5 6.8 L11.5 3 L15.5 6.8 Z M7 7.5 L3 11.5 L7 15.5 Z" fill="#111"/></svg>
<div class="a" style="left:942px;top:92px;width:16px;height:16px;background:#c5d9f1"></div>
<svg style="left:942px;top:92px" width="16" height="16" viewBox="0 0 16 16"><g ><path d="M2 3.5 V8.5 H7" fill="none" stroke="#2b5fc4" stroke-width="1.6"/><path d="M2.5 8 C4 4 9 3.5 9.5 8 C9.8 11 7.5 12.5 5.5 12.5" fill="none" stroke="#2b5fc4" stroke-width="1.8"/></g><path d="M11 8 H15.5 L13.2 10.3 Z" fill="#333"/></svg>
<div class="a" style="left:965px;top:92px;width:16px;height:16px;background:#c5d9f1"></div>
<svg style="left:965px;top:92px" width="16" height="16" viewBox="0 0 16 16"><g transform="translate(11 0) scale(-1 1)"><path d="M2 3.5 V8.5 H7" fill="none" stroke="#2b5fc4" stroke-width="1.6"/><path d="M2.5 8 C4 4 9 3.5 9.5 8 C9.8 11 7.5 12.5 5.5 12.5" fill="none" stroke="#2b5fc4" stroke-width="1.8"/></g><path d="M11 8 H15.5 L13.2 10.3 Z" fill="#333"/></svg>
</div>
<!-- device -->
<div class="sec" id="sec-device">
<svg style="left:0;top:0" width="1919" height="978" viewBox="0 0 1919 978">
<defs>
<linearGradient id="gBody" x1="0" y1="118" x2="0" y2="610" gradientUnits="userSpaceOnUse">
 <stop offset="0" stop-color="#3a3a3a"/><stop offset="0.055" stop-color="#494949"/><stop offset="0.09" stop-color="#404040"/><stop offset="0.12" stop-color="#2e2e2e"/>
 <stop offset="0.5" stop-color="#303030"/><stop offset="0.87" stop-color="#3a3a3a"/><stop offset="0.90" stop-color="#303030"/><stop offset="0.96" stop-color="#2b2b2b"/><stop offset="1" stop-color="#262626"/>
</linearGradient>
<linearGradient id="gSide" x1="396" y1="0" x2="1383" y2="0" gradientUnits="userSpaceOnUse">
 <stop offset="0" stop-color="#1e1e1e" stop-opacity="0.55"/><stop offset="0.012" stop-color="#555" stop-opacity="0.35"/><stop offset="0.035" stop-color="#333" stop-opacity="0"/>
 <stop offset="0.965" stop-color="#333" stop-opacity="0"/><stop offset="0.985" stop-color="#4a4a4a" stop-opacity="0.45"/><stop offset="1" stop-color="#222" stop-opacity="0.6"/>
</linearGradient>
<linearGradient id="gBezel" x1="0" y1="181" x2="0" y2="545" gradientUnits="userSpaceOnUse">
 <stop offset="0" stop-color="#acacac"/><stop offset="0.06" stop-color="#a4a4a4"/><stop offset="0.5" stop-color="#909090"/><stop offset="0.9" stop-color="#a0a0a0"/><stop offset="1" stop-color="#9c9c9c"/>
</linearGradient>
<linearGradient id="gBezelLo" x1="0" y1="507" x2="0" y2="540" gradientUnits="userSpaceOnUse">
 <stop offset="0" stop-color="#e4e4e4"/><stop offset="0.35" stop-color="#d2d2d2"/><stop offset="1" stop-color="#c4c4c4"/>
</linearGradient>
<radialGradient id="gInner" cx="900" cy="185" r="480" gradientTransform="translate(900 185) scale(1 0.12) translate(-900 -185)" gradientUnits="userSpaceOnUse">
 <stop offset="0" stop-color="#585858"/><stop offset="0.6" stop-color="#444"/><stop offset="1" stop-color="#363636"/>
</radialGradient>
<linearGradient id="gScreen" x1="534" y1="0" x2="1013" y2="0" gradientUnits="userSpaceOnUse">
 <stop offset="0" stop-color="#b9c9e9"/><stop offset="0.12" stop-color="#c3d1ee"/><stop offset="0.47" stop-color="#ffffff"/><stop offset="0.88" stop-color="#d3dcf1"/><stop offset="1" stop-color="#bccbea"/>
</linearGradient>
<linearGradient id="gPanel" x1="587" y1="0" x2="959" y2="0" gradientUnits="userSpaceOnUse">
 <stop offset="0" stop-color="#c0cfec"/><stop offset="0.1" stop-color="#c9d6ee"/><stop offset="0.47" stop-color="#ffffff"/><stop offset="0.9" stop-color="#d6def1"/><stop offset="1" stop-color="#cdd8ef"/>
</linearGradient>
<linearGradient id="gPanelR" x1="0" y1="204" x2="0" y2="524" gradientUnits="userSpaceOnUse">
 <stop offset="0" stop-color="#3b3b3b"/><stop offset="0.5" stop-color="#363636"/><stop offset="1" stop-color="#2f2f2f"/>
</linearGradient>
<radialGradient id="gKnob" cx="1250" cy="281" r="70" gradientUnits="userSpaceOnUse">
 <stop offset="0" stop-color="#2b2b2b"/><stop offset="0.66" stop-color="#2d2d2d"/><stop offset="0.7" stop-color="#222"/><stop offset="0.85" stop-color="#383838"/><stop offset="1" stop-color="#1c1c1c"/>
</radialGradient>
<linearGradient id="gKnobBase" x1="0" y1="206" x2="0" y2="356" gradientUnits="userSpaceOnUse"><stop offset="0" stop-color="#2b2b2b"/><stop offset="1" stop-color="#181818"/></linearGradient>
<linearGradient id="gKnobRib" x1="0" y1="210" x2="0" y2="352" gradientUnits="userSpaceOnUse"><stop offset="0" stop-color="#3f3f3f"/><stop offset="0.5" stop-color="#313131"/><stop offset="1" stop-color="#222"/></linearGradient>
<linearGradient id="gKnobTop" x1="0" y1="234" x2="0" y2="328" gradientUnits="userSpaceOnUse"><stop offset="0" stop-color="#2e2e2e"/><stop offset="1" stop-color="#272727"/></linearGradient>
<linearGradient id="gDome" x1="1218" y1="0" x2="1331" y2="0" gradientUnits="userSpaceOnUse">
 <stop offset="0" stop-color="#2a2a2a"/><stop offset="0.2" stop-color="#353535"/><stop offset="0.36" stop-color="#686868"/><stop offset="0.52" stop-color="#484848"/><stop offset="0.7" stop-color="#666"/><stop offset="0.86" stop-color="#3a3a3a"/><stop offset="1" stop-color="#2c2c2c"/>
</linearGradient>
<filter id="blur2" x="-5%" y="-5%" width="110%" height="110%"><feGaussianBlur stdDeviation="2"/></filter>
<filter id="blur1" x="-5%" y="-5%" width="110%" height="110%"><feGaussianBlur stdDeviation="1"/></filter>
</defs>
<g id="dev">
<path d="M395.5,245 C396,200 400,140 446,134 Q890,102 1330,133.6 C1375,138 1382,185 1383,245 C1385.5,330 1386,420 1384.5,490 C1383,550 1368,590 1314,596 Q890,621 455,596 C410,592 397,560 396,500 C394.5,420 394.5,330 395.5,245 Z" fill="url(#gBody)"/>
<path d="M395.5,245 C396,200 400,140 446,134 Q890,102 1330,133.6 C1375,138 1382,185 1383,245 C1385.5,330 1386,420 1384.5,490 C1383,550 1368,590 1314,596 Q890,621 455,596 C410,592 397,560 396,500 C394.5,420 394.5,330 395.5,245 Z" fill="url(#gSide)"/>
<path d="M419,222 C419,203 424,193 442,190 Q890,157.8 1338,189 C1356,192 1361,202 1361,222 L1361,504 C1361,526 1355,532 1338,534 Q890,564 442,533 C424,530 419,522 419,504 Z" fill="#1c1c1c" filter="url(#blur2)"/>
<path d="M424,518 C426,531 434,535 448,536 Q890,566 1332,536 C1346,534 1353,530 1355,518" fill="none" stroke="#484848" stroke-width="6" filter="url(#blur1)"/>
<path d="M424,222 C424,205 428,197 444,195 Q890,167.6 1336,195 C1351,197 1355,205 1355,222 L1355,502 C1355,521 1350,527 1336,529 Q890,559 444,529 C428,527 424,519 424,502 Z" fill="url(#gBezel)"/>
<path d="M436,500 L1345,500 L1345,512 C1345,520 1342,524 1336,524 Q890,547.7 444,523 C438,522 436,518 436,510 Z" fill="url(#gBezelLo)"/>
<path d="M432,222 C432,210 436,205 448,204 Q890,176.8 1332,204 C1343,205 1346,210 1346,220 L1346,505 C1346,518 1342,524 1330,524 L1036,524 C1025,524 1019,518 1019,508 L1019,507 L527,507 L527,508 C527,516 522,521 513,521 L448,521 C436,521 432,516 432,505 Z" fill="url(#gInner)"/>
<path d="M436,218 C436,208 440,204 450,204 L511,204 C521,204 527,210 527,222 L527,508 C527,516 522,521 513,521 L450,521 C440,521 436,517 436,507 Z" fill="#333" stroke="#555" stroke-width="0.8"/>
<path d="M1019,222 C1019,210 1025,204 1036,203 L1330,203 C1341,203 1346,208 1346,220 L1346,506 C1346,518 1341,524 1330,524 L1036,524 C1025,524 1019,518 1019,508 Z" fill="url(#gPanelR)" stroke="#505050" stroke-width="0.8"/>
<rect x="527" y="218.5" width="492" height="288.5" fill="#000"/>
<rect x="534" y="227" width="479" height="273" fill="url(#gScreen)"/>
<path d="M539,242 C539,236 543,232 549,232 L612,232 L612,240 L587,240 L587,282 L539,282 Z" fill="#19171a"/>
<rect x="539" y="301" width="48" height="53" fill="#19171a"/>
<rect x="539" y="374" width="48" height="53" fill="#19171a"/>
<path d="M539,446 L587,446 L587,487 L612,487 L612,495 L549,495 C543,495 539,491 539,485 Z" fill="#19171a"/>
<rect x="618" y="232" width="310" height="8" fill="#19171a"/>
<rect x="618" y="487" width="310" height="8" fill="#19171a"/>
<path d="M1007,242 C1007,236 1003,232 997,232 L935,232 L935,240 L959,240 L959,282 L1007,282 Z" fill="#19171a"/>
<rect x="959" y="301" width="48" height="53" fill="#19171a"/>
<rect x="959" y="374" width="48" height="53" fill="#19171a"/>
<path d="M1007,446 L959,446 L959,487 L935,487 L935,495 L997,495 C1003,495 1007,491 1007,485 Z" fill="#19171a"/>
<rect x="587" y="239.5" width="372" height="247.5" rx="7" fill="url(#gPanel)"/>
<rect x="772.6" y="303.5" width="1.3" height="176.5" fill="#666"/>
<rect x="789.0" y="303.5" width="1.3" height="176.5" fill="#666"/>
<rect x="805.5" y="303.5" width="1.3" height="176.5" fill="#666"/>
<rect x="821.9" y="303.5" width="1.3" height="176.5" fill="#666"/>
<rect x="838.3" y="303.5" width="1.3" height="176.5" fill="#666"/>
<rect x="854.8" y="303.5" width="1.3" height="176.5" fill="#666"/>
<rect x="871.2" y="303.5" width="1.3" height="176.5" fill="#666"/>
<rect x="887.6" y="303.5" width="1.3" height="176.5" fill="#666"/>
<rect x="904.0" y="303.5" width="1.3" height="176.5" fill="#666"/>
<rect x="920.5" y="303.5" width="1.3" height="176.5" fill="#666"/>
<rect x="936.9" y="303.5" width="1.3" height="176.5" fill="#666"/>
<text x="722" y="271.7" font-family="Liberation Sans, sans-serif" font-weight="bold" font-size="24" fill="#0a6ab4" stroke="#0a6ab4" stroke-width="0.7" textLength="135.3" lengthAdjust="spacingAndGlyphs">SETTINGS</text>
<g stroke="#0a6ab4" stroke-width="3.6" stroke-linecap="round" fill="none"><path d="M676,254 L697,275"/><path d="M696,254 L675,275"/></g><path d="M672,250 L680,252 L674,258 Z" fill="#0a6ab4"/><path d="M689.5,250.5 L691.5,247.3 L693.5,250.5 L697,254 L693,258 Z" fill="#0a6ab4"/>
<text x="603" y="354" font-family="Liberation Sans, sans-serif" font-size="20" fill="#6a6a6a" textLength="167">Display-Backlight</text>
<text x="603" y="428" font-family="Liberation Sans, sans-serif" font-size="20" fill="#6a6a6a" textLength="132">Key-Backlight</text>
<circle cx="789.2" cy="292.4" r="1.7" fill="#595959"/><circle cx="822.1" cy="292.4" r="1.7" fill="#595959"/><circle cx="855.1" cy="292.4" r="1.7" fill="#595959"/><circle cx="887.6" cy="292.4" r="1.7" fill="#595959"/><circle cx="920.5" cy="292.4" r="1.7" fill="#595959"/><text x="799.7" y="296" font-family="Liberation Sans, sans-serif" font-weight="bold" font-size="10.5" fill="#595959" textLength="12" lengthAdjust="spacingAndGlyphs">20</text><text x="832.5" y="296" font-family="Liberation Sans, sans-serif" font-weight="bold" font-size="10.5" fill="#595959" textLength="12.4" lengthAdjust="spacingAndGlyphs">40</text><text x="865.1" y="296" font-family="Liberation Sans, sans-serif" font-weight="bold" font-size="10.5" fill="#595959" textLength="12.2" lengthAdjust="spacingAndGlyphs">60</text><text x="898.3" y="296" font-family="Liberation Sans, sans-serif" font-weight="bold" font-size="10.5" fill="#595959" textLength="12" lengthAdjust="spacingAndGlyphs">80</text><text x="926" y="296" font-family="Liberation Sans, sans-serif" font-weight="bold" font-size="10.5" fill="#595959" textLength="27" lengthAdjust="spacingAndGlyphs">100%</text>
<rect x="533.5" y="227.5" width="67" height="273" fill="none" stroke="#ffc000" stroke-width="1" stroke-dasharray="6 3"/>
<rect x="945.5" y="227.5" width="67" height="273" fill="none" stroke="#f0b800" stroke-width="1" stroke-dasharray="6 3"/>
<rect x="527" y="221" width="6" height="6" fill="#ffc000"/>
<rect x="527" y="500" width="6" height="6" fill="#ffc000"/>
<rect x="564" y="221" width="6" height="6" fill="#ffc000"/>
<rect x="564" y="500" width="6" height="6" fill="#ffc000"/>
<rect x="601" y="221" width="6" height="6" fill="#ffc000"/>
<rect x="601" y="500" width="6" height="6" fill="#ffc000"/>
<rect x="527" y="360" width="6" height="6" fill="#ffc000"/>
<path d="M524,238 L442,238 L440,285 L524,285" fill="none" stroke="#fff" stroke-width="2"/>
<path d="M461.0,250.5 L472.0,261.5 L461.0,272.5" fill="none" stroke="#fff" stroke-width="2.2"/>
<path d="M1022,238 L1113.0,238 L1114.5,285 L1022,285" fill="none" stroke="#fff" stroke-width="2"/>
<path d="M1090.0,250.5 L1079.0,261.5 L1090.0,272.5" fill="none" stroke="#fff" stroke-width="2.2"/>
<path d="M524,305 L439.5,305 L438.5,352 L524,352" fill="none" stroke="#fff" stroke-width="2"/>
<path d="M457.0,317.5 L468.0,328.5 L457.0,339.5" fill="none" stroke="#fff" stroke-width="2.2"/>
<path d="M1022,305 L1116.0,305 L1117.5,352 L1022,352" fill="none" stroke="#fff" stroke-width="2"/>
<path d="M1097.5,317.5 L1086.5,328.5 L1097.5,339.5" fill="none" stroke="#fff" stroke-width="2.2"/>
<path d="M524,373 L438.5,373 L439.5,420 L524,420" fill="none" stroke="#fff" stroke-width="2"/>
<path d="M457.0,385.5 L468.0,396.5 L457.0,407.5" fill="none" stroke="#fff" stroke-width="2.2"/>
<path d="M1022,373 L1116.0,373 L1117.5,420 L1022,420" fill="none" stroke="#fff" stroke-width="2"/>
<path d="M1097.5,385.5 L1086.5,396.5 L1097.5,407.5" fill="none" stroke="#fff" stroke-width="2.2"/>
<path d="M524,441 L440,441 L442.4,488 L524,488" fill="none" stroke="#fff" stroke-width="2"/>
<path d="M461.0,453.5 L472.0,464.5 L461.0,475.5" fill="none" stroke="#fff" stroke-width="2.2"/>
<path d="M1022,441 L1113.0,441 L1114.5,488 L1022,488" fill="none" stroke="#fff" stroke-width="2"/>
<path d="M1090.0,453.5 L1079.0,464.5 L1090.0,475.5" fill="none" stroke="#fff" stroke-width="2.2"/>
<circle cx="1141" cy="241" r="7.5" fill="#fff"/>
<path d="M1137.5,263.5 A6,6 0 1 0 1146.5,263.5" fill="none" stroke="#fff" stroke-width="1.8"/><path d="M1142,260 L1142,268" stroke="#fff" stroke-width="1.8"/>
<path d="M1136,295 L1149,295 M1140,295 L1143,291.5 L1146,291.5 M1142,295 L1145,298.5 L1147,298.5" fill="none" stroke="#fff" stroke-width="1.1"/><circle cx="1137.5" cy="295" r="1.6" fill="#fff"/>
<path d="M1137,329 A12,12 0 0 1 1151,317" fill="none" stroke="#fff" stroke-width="2"/><path d="M1141,329 A8,8 0 0 1 1151,321.5" fill="none" stroke="#fff" stroke-width="2"/><path d="M1146,329 L1151,329 L1151,325 A4,4 0 0 0 1146,329 Z" fill="#fff"/>
<rect x="1137" y="341" width="15" height="15" fill="#fff"/>
<circle cx="1250.3" cy="281.3" r="75.6" fill="#fff"/>
<circle cx="1251.3" cy="280.2" r="72.2" fill="url(#gKnobBase)"/>
<circle cx="1251" cy="280.5" r="57" fill="none" stroke="url(#gKnobRib)" stroke-width="25" stroke-dasharray="11.3 3.623" transform="rotate(-5 1251 280.5)"/>
<circle cx="1251" cy="280.5" r="70" fill="none" stroke="#1c1c1c" stroke-width="3" opacity="0.5"/>
<circle cx="1251" cy="280.5" r="44" fill="url(#gKnobTop)" stroke="#222" stroke-width="1.2"/>
<rect x="1140.5" y="372.5" width="48.5" height="48.5" rx="2" fill="none" stroke="#fff" stroke-width="3"/>
<rect x="1213.5" y="372.5" width="48.5" height="48.5" rx="2" fill="none" stroke="#fff" stroke-width="3"/>
<path d="M1139,441 L1187.5,440.5 L1185.5,488.5 L1137.5,489 Z" fill="none" stroke="#fff" stroke-width="3" stroke-linejoin="round"/>
<path d="M1152.1,386.1 A16.2,16.2 0 0 1 1172.1,382.2" fill="none" stroke="#fff" stroke-width="3.9"/>
<path d="M1176.9,386.1 L1174.1,375.9 L1168.6,387.7 Z" fill="#fff"/>
<path d="M1179.9,391.5 A16.2,16.2 0 0 1 1173.1,410.2" fill="none" stroke="#fff" stroke-width="3.9"/>
<path d="M1167.3,412.5 L1177.5,415.1 L1170.1,404.4 Z" fill="#fff"/>
<path d="M1161.7,412.5 A16.2,16.2 0 0 1 1148.3,397.1" fill="none" stroke="#fff" stroke-width="3.9"/>
<path d="M1149.3,391.0 L1141.9,398.5 L1154.8,397.3 Z" fill="#fff"/>
<circle cx="1178.7" cy="388.6" r="2.3" fill="#fff"/>
<circle cx="1164.5" cy="412.7" r="2.3" fill="#fff"/>
<circle cx="1150.3" cy="388.6" r="2.3" fill="#fff"/>
<circle cx="1237.6" cy="397" r="4" fill="#fff"/>
<path d="M1217.6,377.5 L1229.1,388.7" stroke="#fff" stroke-width="3.2"/>
<path d="M1232.8,392.3 L1224.3,390.1 L1230.6,383.8 Z" fill="#fff"/>
<path d="M1257.6,377.5 L1246.1,388.7" stroke="#fff" stroke-width="3.2"/>
<path d="M1242.3999999999999,392.3 L1250.8999999999999,390.1 L1244.6,383.8 Z" fill="#fff"/>
<path d="M1217.6,416.5 L1229.1,405.3" stroke="#fff" stroke-width="3.2"/>
<path d="M1232.8,401.7 L1224.3,403.9 L1230.6,410.2 Z" fill="#fff"/>
<path d="M1257.6,416.5 L1246.1,405.3" stroke="#fff" stroke-width="3.2"/>
<path d="M1242.3999999999999,401.7 L1250.8999999999999,403.9 L1244.6,410.2 Z" fill="#fff"/>
<path d="M1146.5,465.7 A17,17 0 1 1 1163.5,481.7" fill="none" stroke="#fff" stroke-width="4.2"/>
<path d="M1140.0,461.7 L1153.0,461.7 L1146.5,470.2 Z" fill="#fff"/>
<circle cx="1151.6" cy="477" r="4" fill="#ececec"/>
<path d="M1210,441 L1207.3,521" stroke="#a6a6a6" stroke-width="2"/><circle cx="1210" cy="441" r="4" fill="#a6a6a6"/>
<path d="M1218,512 C1226,490 1240,447 1275.5,445 C1311,447 1325,490 1331.8,512 C1300,517 1250,517 1218,512 Z" fill="url(#gDome)"/>
<path d="M1217.5,511 C1250,507.5 1300,507.5 1332,511 C1332.5,516 1326,517.5 1312,516.5 C1292,514 1256,514 1238,516.5 C1224,517.5 1217.5,516 1217.5,511 Z" fill="#1d1d1d" filter="url(#blur1)"/>
</g>
</svg>
</div>
<!-- satellite -->
<div class="sec" id="sec-satellite">
<div class="panel" style="left:3px;top:734px;width:383px;height:219px"><div class="hdr"></div></div>
<div class="a" style="left:4px;top:735px;width:116px;height:19px;background:#fff;border-right:1px solid #8b9097"></div>
<div class="a" style="left:120px;top:735px;width:77px;height:19px;border-right:1px solid #8b9097"></div>
<span class="t" style="letter-spacing:-0.08px;left:9px;top:740px;font-size:11.5px;line-height:11.5px;color:#000;font-weight:bold;">Satellite Window</span>
<svg style="left:105px;top:740px" width="9" height="9"><path d="M0.8 0.8 L8 8 M8 0.8 L0.8 8" stroke="#222" stroke-width="1.15"/></svg>
<span class="t" style="letter-spacing:-0.26px;left:124px;top:740px;font-size:11.5px;line-height:11.5px;color:#000;font-weight:bold;">Navigator</span>
<div class="a" style="left:369px;top:744px;width:10px;height:2px;background:#4a4a4a"></div>
<div class="a" style="left:4px;top:756px;width:381px;height:195px;border:1px solid #3c3c3c;background:#f0f0f0;overflow:hidden"><svg style="left:-5px;top:-757px" width="400" height="960" viewBox="0 0 400 960"><use href="#dev" transform="translate(-130.6 719.1) scale(0.3447 0.3393)"/></svg><div class="a" style="left:0;top:0;width:381px;height:195px;background:rgba(205,205,205,0.5)"></div></div>
</div>
<!-- right -->
<div class="sec" id="sec-right">
<div class="panel" style="left:1500px;top:66px;width:398px;height:367px"><div class="hdr"></div></div>
<div class="a" style="left:1501px;top:67px;width:63px;height:19px;background:#fff;border-right:1px solid #8b9097"></div>
<span class="t" style="letter-spacing:-0.12px;left:1505px;top:72px;font-size:11.5px;line-height:11.5px;color:#000;font-weight:bold;">Palette</span>
<svg style="left:1550px;top:73px" width="9" height="9"><path d="M0.8 0.8 L8 8 M8 0.8 L0.8 8" stroke="#222" stroke-width="1.15"/></svg>
<div class="a" style="left:1881px;top:76px;width:10px;height:2px;background:#4a4a4a"></div>
<div class="a" style="left:1502px;top:88px;width:378px;height:15px;background:#d6d6d6"></div>
<div class="a" style="left:1506px;top:91px;width:9px;height:9px;border:1px solid #848484;background:#fff;border-radius:1px"></div><div class="a" style="left:1508px;top:95px;width:5px;height:1px;background:#3c5aa0"></div>
<span class="t" style="letter-spacing:0.17px;left:1519px;top:90px;font-size:11.5px;line-height:11.5px;color:#000;font-weight:bold;">Container</span>
<div class="a" style="left:1502px;top:143px;width:378px;height:15px;background:#d6d6d6"></div>
<div class="a" style="left:1506px;top:146px;width:9px;height:9px;border:1px solid #848484;background:#fff;border-radius:1px"></div><div class="a" style="left:1508px;top:150px;width:5px;height:1px;background:#3c5aa0"></div>
<span class="t" style="letter-spacing:-0.02px;left:1519px;top:145px;font-size:11.5px;line-height:11.5px;color:#000;font-weight:bold;">Common Controls</span>
<div class="a" style="left:1502px;top:237px;width:378px;height:15px;background:#d6d6d6"></div>
<div class="a" style="left:1506px;top:240px;width:9px;height:9px;border:1px solid #848484;background:#fff;border-radius:1px"></div><div class="a" style="left:1508px;top:244px;width:5px;height:1px;background:#3c5aa0"></div>
<span class="t" style="letter-spacing:0.23px;left:1519px;top:239px;font-size:11.5px;line-height:11.5px;color:#000;font-weight:bold;">Measurement Controls</span>
<div class="a" style="left:1502px;top:370px;width:378px;height:15px;background:#d6d6d6"></div>
<div class="a" style="left:1506px;top:373px;width:9px;height:9px;border:1px solid #848484;background:#fff;border-radius:1px"></div><div class="a" style="left:1508px;top:377px;width:5px;height:1px;background:#3c5aa0"></div>
<span class="t" style="letter-spacing:0.01px;left:1519px;top:372px;font-size:11.5px;line-height:11.5px;color:#000;font-weight:bold;">Lamps and Switches</span>
<span class="t" style="letter-spacing:-1.06px;left:1540px;top:117px;font-size:11.5px;line-height:11.5px;color:#000;">Frame</span>
<span class="t" style="letter-spacing:-0.48px;left:1634px;top:117px;font-size:11.5px;line-height:11.5px;color:#000;">Container</span>
<span class="t" style="letter-spacing:-0.45px;left:1540px;top:172px;font-size:11.5px;line-height:11.5px;color:#000;">Button</span>
<span class="t" style="letter-spacing:-0.47px;left:1665px;top:172px;font-size:11.5px;line-height:11.5px;color:#000;">String Field</span>
<span class="t" style="letter-spacing:-0.66px;left:1791px;top:172px;font-size:11.5px;line-height:11.5px;color:#000;">Numeric Field</span>
<span class="t" style="letter-spacing:-0.59px;left:1540px;top:211px;font-size:11.5px;line-height:11.5px;color:#000;">Picture Graphic</span>
<span class="t" style="letter-spacing:-0.38px;left:1665px;top:211px;font-size:11.5px;line-height:11.5px;color:#000;">Table</span>
<span class="t" style="letter-spacing:-0.64px;left:1791px;top:211px;font-size:11.5px;line-height:11.5px;color:#000;">List</span>
<span class="t" style="letter-spacing:-0.6px;left:1540px;top:266px;font-size:11.5px;line-height:11.5px;color:#000;">Meter</span>
<span class="t" style="letter-spacing:-0.88px;left:1665px;top:266px;font-size:11.5px;line-height:11.5px;color:#000;">Gauge</span>
<span class="t" style="letter-spacing:-0.62px;left:1791px;top:266px;font-size:11.5px;line-height:11.5px;color:#000;">Gauge 270</span>
<span class="t" style="letter-spacing:-0.74px;left:1540px;top:305px;font-size:11.5px;line-height:11.5px;color:#000;">Gauge 180</span>
<span class="t" style="letter-spacing:-0.65px;left:1665px;top:305px;font-size:11.5px;line-height:11.5px;color:#000;">Gauge 90</span>
<span class="t" style="letter-spacing:-0.43px;left:1791px;top:305px;font-size:11.5px;line-height:11.5px;color:#000;">Arched Bargraph</span>
<span class="t" style="letter-spacing:-0.53px;left:1540px;top:344px;font-size:11.5px;line-height:11.5px;color:#000;">Linear Bargraph</span>
<span class="t" style="letter-spacing:-0.74px;left:1665px;top:344px;font-size:11.5px;line-height:11.5px;color:#000;">Graph</span>
<span class="t" style="letter-spacing:-1.59px;left:1540px;top:399px;font-size:11.5px;line-height:11.5px;color:#000;">Lamp</span>
<span class="t" style="letter-spacing:-0.52px;left:1665px;top:399px;font-size:11.5px;line-height:11.5px;color:#000;">Power Switch</span>
<span class="t" style="letter-spacing:-0.63px;left:1791px;top:399px;font-size:11.5px;line-height:11.5px;color:#000;">Push Switch</span>
<div class="a" style="left:1881px;top:88px;width:16px;height:344px;background:#f0f0f0"></div>
<div class="a" style="left:1881px;top:104px;width:15px;height:247px;background:#cdcdcd"></div>
<svg style="left:1884px;top:93px" width="10" height="6"><path d="M0.8 5.2 L5 1 L9.2 5.2" fill="none" stroke="#505050" stroke-width="2"/></svg>
<svg style="left:1884px;top:421px" width="10" height="6"><path d="M0.8 0.8 L5 5 L9.2 0.8" fill="none" stroke="#505050" stroke-width="2"/></svg>
<div class="a" style="left:1904px;top:75px;width:14px;height:72px;writing-mode:vertical-rl;font-size:11px;line-height:14px;letter-spacing:-0.1px;white-space:nowrap">Symbol Library</div>
<div class="panel" style="left:1500px;top:437px;width:398px;height:516px"><div class="hdr"></div></div>
<div class="a" style="left:1501px;top:438px;width:221px;height:19px;background:#fff;border-right:1px solid #8b9097"></div>
<span class="t" style="letter-spacing:0.02px;left:1506px;top:443px;font-size:11.5px;line-height:11.5px;color:#000;font-weight:bold;">Softkey Frame Left [59] - Properties</span>
<svg style="left:1708px;top:443px" width="9" height="9"><path d="M0.8 0.8 L8 8 M8 0.8 L0.8 8" stroke="#222" stroke-width="1.15"/></svg>
<div class="a" style="left:1881px;top:447px;width:10px;height:2px;background:#4a4a4a"></div>
<div class="a" style="left:1503px;top:460px;width:62px;height:18px;background:#cce4f7;border:1px solid #99d1ff"></div>
<span class="t" style="letter-spacing:-0.38px;left:1509px;top:464px;font-size:11.5px;line-height:11.5px;color:#000;">Properties</span>
<span class="t" style="letter-spacing:-0.23px;left:1580px;top:464px;font-size:11.5px;line-height:11.5px;color:#000;">Events</span>
<div class="a" style="left:1501px;top:482px;width:379px;height:405px;background:#fff;overflow:hidden"></div>
<div class="a" style="left:0;top:0;width:1880px;height:887px;overflow:hidden"><div class="a" style="left:1501px;top:482px;width:379px;height:18px;background:#d6d6d6"></div>
<div class="a" style="left:1503px;top:486px;width:9px;height:9px;border:1px solid #848484;background:#fff;border-radius:1px"></div><div class="a" style="left:1505px;top:490px;width:5px;height:1px;background:#3c5aa0"></div>
<span class="t" style="letter-spacing:-0.49px;left:1513px;top:486px;font-size:11.5px;line-height:11.5px;color:#000;">General</span>
<div class="a" style="left:1501px;top:517px;width:379px;height:1px;background:#dcdcdc"></div>
<div class="a" style="left:1690px;top:500px;width:1px;height:18px;background:#dcdcdc"></div>
<span class="t" style="left:1503px;top:504px;font-size:11.5px;line-height:11.5px;color:#8c8c8c;">ID</span>
<span class="t" style="left:1694px;top:503px;font-size:11.5px;line-height:11.5px;color:#8c8c8c;">59</span>
<div class="a" style="left:1501px;top:535px;width:379px;height:1px;background:#dcdcdc"></div>
<div class="a" style="left:1690px;top:518px;width:1px;height:18px;background:#dcdcdc"></div>
<span class="t" style="letter-spacing:-0.61px;left:1503px;top:522px;font-size:11.5px;line-height:11.5px;color:#8c8c8c;">Type ID</span>
<span class="t" style="left:1694px;top:521px;font-size:11.5px;line-height:11.5px;color:#8c8c8c;">4</span>
<div class="a" style="left:1501px;top:553px;width:379px;height:1px;background:#dcdcdc"></div>
<div class="a" style="left:1690px;top:536px;width:1px;height:18px;background:#dcdcdc"></div>
<span class="t" style="letter-spacing:-1.23px;left:1503px;top:540px;font-size:11.5px;line-height:11.5px;color:#000;">Name</span>
<span class="t" style="letter-spacing:-0.3px;left:1694px;top:539px;font-size:11.5px;line-height:11.5px;color:#000;">Softkey Frame Left</span>
<div class="a" style="left:1501px;top:571px;width:379px;height:1px;background:#dcdcdc"></div>
<div class="a" style="left:1690px;top:554px;width:1px;height:18px;background:#dcdcdc"></div>
<span class="t" style="letter-spacing:-0.37px;left:1503px;top:558px;font-size:11.5px;line-height:11.5px;color:#000;">X Location</span>
<span class="t" style="left:1694px;top:557px;font-size:11.5px;line-height:11.5px;color:#000;">0</span>
<div class="a" style="left:1501px;top:589px;width:379px;height:1px;background:#dcdcdc"></div>
<div class="a" style="left:1690px;top:572px;width:1px;height:18px;background:#dcdcdc"></div>
<span class="t" style="letter-spacing:-0.24px;left:1503px;top:576px;font-size:11.5px;line-height:11.5px;color:#000;">Y Location</span>
<span class="t" style="left:1694px;top:575px;font-size:11.5px;line-height:11.5px;color:#000;">0</span>
<div class="a" style="left:1501px;top:607px;width:379px;height:1px;background:#dcdcdc"></div>
<div class="a" style="left:1690px;top:590px;width:1px;height:18px;background:#dcdcdc"></div>
<span class="t" style="letter-spacing:-0.6px;left:1503px;top:594px;font-size:11.5px;line-height:11.5px;color:#000;">Width</span>
<span class="t" style="left:1694px;top:593px;font-size:11.5px;line-height:11.5px;color:#000;">68</span>
<div class="a" style="left:1501px;top:625px;width:379px;height:1px;background:#dcdcdc"></div>
<div class="a" style="left:1690px;top:608px;width:1px;height:18px;background:#dcdcdc"></div>
<span class="t" style="letter-spacing:-0.65px;left:1503px;top:612px;font-size:11.5px;line-height:11.5px;color:#8c8c8c;">Height</span>
<span class="t" style="left:1694px;top:611px;font-size:11.5px;line-height:11.5px;color:#8c8c8c;">272</span>
<div class="a" style="left:1501px;top:626px;width:379px;height:18px;background:#d6d6d6"></div>
<div class="a" style="left:1503px;top:630px;width:9px;height:9px;border:1px solid #848484;background:#fff;border-radius:1px"></div><div class="a" style="left:1505px;top:634px;width:5px;height:1px;background:#3c5aa0"></div>
<span class="t" style="letter-spacing:-0.4px;left:1513px;top:630px;font-size:11.5px;line-height:11.5px;color:#000;">Dependency</span>
<div class="a" style="left:1501px;top:644px;width:379px;height:18px;background:#d6d6d6"></div>
<div class="a" style="left:1503px;top:648px;width:9px;height:9px;border:1px solid #848484;background:#fff;border-radius:1px"></div><div class="a" style="left:1505px;top:652px;width:5px;height:1px;background:#3c5aa0"></div>
<span class="t" style="letter-spacing:-0.5px;left:1513px;top:648px;font-size:11.5px;line-height:11.5px;color:#000;">Skin Properties</span>
<div class="a" style="left:1501px;top:679px;width:379px;height:1px;background:#dcdcdc"></div>
<div class="a" style="left:1690px;top:662px;width:1px;height:18px;background:#dcdcdc"></div>
<span class="t" style="letter-spacing:-0.4px;left:1503px;top:666px;font-size:11.5px;line-height:11.5px;color:#000;">Background Color</span>
<div class="a" style="left:1693px;top:665px;width:11px;height:11px;background:#004080;border:1px solid #222"></div>
<span class="t" style="letter-spacing:-0.38px;left:1711px;top:665px;font-size:11.5px;line-height:11.5px;color:#000;">255,0,64,128</span>
<div class="a" style="left:1865px;top:663px;width:13px;height:15px;background:#e8e8e8;border:1px solid #adadad"></div>
<span class="t" style="left:1867px;top:667px;font-size:9px;line-height:9px;color:#000;">...</span>
<div class="a" style="left:1501px;top:697px;width:379px;height:1px;background:#dcdcdc"></div>
<div class="a" style="left:1690px;top:680px;width:1px;height:18px;background:#dcdcdc"></div>
<span class="t" style="letter-spacing:-0.5px;left:1503px;top:684px;font-size:11.5px;line-height:11.5px;color:#000;">Background Image</span>
<div class="a" style="left:1865px;top:681px;width:13px;height:15px;background:#e8e8e8;border:1px solid #adadad"></div>
<span class="t" style="left:1867px;top:685px;font-size:9px;line-height:9px;color:#000;">...</span>
<div class="a" style="left:1501px;top:715px;width:379px;height:1px;background:#dcdcdc"></div>
<div class="a" style="left:1690px;top:698px;width:1px;height:18px;background:#dcdcdc"></div>
<span class="t" style="letter-spacing:-0.16px;left:1503px;top:702px;font-size:11.5px;line-height:11.5px;color:#000;">Draw Border</span>
<div class="cb" style="left:1695px;top:700px;border-color:#333"></div>
<div class="a" style="left:1501px;top:733px;width:379px;height:1px;background:#dcdcdc"></div>
<div class="a" style="left:1690px;top:716px;width:1px;height:18px;background:#dcdcdc"></div>
<span class="t" style="letter-spacing:-0.37px;left:1503px;top:720px;font-size:11.5px;line-height:11.5px;color:#000;">Border Width</span>
<span class="t" style="left:1694px;top:719px;font-size:11.5px;line-height:11.5px;color:#000;">3</span>
<div class="a" style="left:1501px;top:751px;width:379px;height:1px;background:#dcdcdc"></div>
<div class="a" style="left:1690px;top:734px;width:1px;height:18px;background:#dcdcdc"></div>
<span class="t" style="letter-spacing:-0.52px;left:1503px;top:738px;font-size:11.5px;line-height:11.5px;color:#000;">Border Image</span>
<div class="a" style="left:1865px;top:735px;width:13px;height:15px;background:#e8e8e8;border:1px solid #adadad"></div>
<span class="t" style="left:1867px;top:739px;font-size:9px;line-height:9px;color:#000;">...</span>
<div class="a" style="left:1501px;top:769px;width:379px;height:1px;background:#dcdcdc"></div>
<div class="a" style="left:1690px;top:752px;width:1px;height:18px;background:#dcdcdc"></div>
<span class="t" style="letter-spacing:-0.33px;left:1503px;top:756px;font-size:11.5px;line-height:11.5px;color:#000;">Border State</span>
<div class="a" style="left:1691px;top:752px;width:188px;height:17px;background:#e1e1e1;border:1px solid #adadad"></div>
<svg style="left:1865px;top:759px" width="8" height="5"><path d="M0.5 0.5 L4 4 L7.5 0.5" fill="none" stroke="#333" stroke-width="1"/></svg>
<span class="t" style="letter-spacing:-0.5px;left:1694px;top:755px;font-size:11.5px;line-height:11.5px;color:#000;">Enabled Without Focus</span>
<div class="a" style="left:1501px;top:787px;width:379px;height:1px;background:#dcdcdc"></div>
<div class="a" style="left:1690px;top:770px;width:1px;height:18px;background:#dcdcdc"></div>
<span class="t" style="letter-spacing:-0.33px;left:1503px;top:774px;font-size:11.5px;line-height:11.5px;color:#000;">Border Profile</span>
<span class="t" style="letter-spacing:-0.33px;left:1694px;top:773px;font-size:11.5px;line-height:11.5px;color:#000;">Border Profile</span>
<div class="a" style="left:1865px;top:771px;width:13px;height:15px;background:#e8e8e8;border:1px solid #adadad"></div>
<span class="t" style="left:1867px;top:775px;font-size:9px;line-height:9px;color:#000;">...</span>
<div class="a" style="left:1501px;top:805px;width:379px;height:1px;background:#dcdcdc"></div>
<div class="a" style="left:1690px;top:788px;width:1px;height:18px;background:#dcdcdc"></div>
<span class="t" style="letter-spacing:-0.26px;left:1503px;top:792px;font-size:11.5px;line-height:11.5px;color:#000;">Transparent</span>
<div class="cb" style="left:1695px;top:790px;border-color:#333"></div>
<svg style="left:1696px;top:791px" width="11" height="11"><path d="M1.5 5.5 L4.5 8.5 L10 2" fill="none" stroke="#222" stroke-width="1.2"/></svg>
<div class="a" style="left:1501px;top:806px;width:379px;height:18px;background:#d6d6d6"></div>
<div class="a" style="left:1503px;top:810px;width:9px;height:9px;border:1px solid #848484;background:#fff;border-radius:1px"></div><div class="a" style="left:1505px;top:814px;width:5px;height:1px;background:#3c5aa0"></div>
<span class="t" style="letter-spacing:-0.26px;left:1513px;top:810px;font-size:11.5px;line-height:11.5px;color:#000;">Visibility</span>
<div class="a" style="left:1501px;top:841px;width:379px;height:1px;background:#dcdcdc"></div>
<div class="a" style="left:1690px;top:824px;width:1px;height:18px;background:#dcdcdc"></div>
<span class="t" style="letter-spacing:-0.26px;left:1503px;top:828px;font-size:11.5px;line-height:11.5px;color:#000;">Visibility</span>
<div class="cb" style="left:1695px;top:826px;border-color:#333"></div>
<div class="a" style="left:1501px;top:859px;width:379px;height:1px;background:#dcdcdc"></div>
<div class="a" style="left:1690px;top:842px;width:1px;height:18px;background:#dcdcdc"></div>
<span class="t" style="letter-spacing:-0.3px;left:1503px;top:846px;font-size:11.5px;line-height:11.5px;color:#8c8c8c;">Visibility Bit</span>
<span class="t" style="letter-spacing:-0.27px;left:1694px;top:845px;font-size:11.5px;line-height:11.5px;color:#8c8c8c;">Value not set</span>
<div class="a" style="left:1501px;top:860px;width:379px;height:18px;background:#d6d6d6"></div>
<div class="a" style="left:1503px;top:864px;width:9px;height:9px;border:1px solid #848484;background:#fff;border-radius:1px"></div><div class="a" style="left:1505px;top:868px;width:5px;height:1px;background:#3c5aa0"></div>
<span class="t" style="letter-spacing:-0.3px;left:1513px;top:864px;font-size:11.5px;line-height:11.5px;color:#000;">Softkey Frame Specific</span>
<div class="a" style="left:1501px;top:895px;width:379px;height:1px;background:#dcdcdc"></div>
<div class="a" style="left:1690px;top:878px;width:1px;height:18px;background:#dcdcdc"></div>
<span class="t" style="letter-spacing:-0.3px;left:1503px;top:882px;font-size:11.5px;line-height:11.5px;color:#000;">Show Unused Levels</span>
<div class="cb" style="left:1695px;top:880px;border-color:#333"></div>
<svg style="left:1696px;top:881px" width="11" height="11"><path d="M1.5 5.5 L4.5 8.5 L10 2" fill="none" stroke="#222" stroke-width="1.2"/></svg></div>
<div class="a" style="left:1881px;top:482px;width:16px;height:405px;background:#f0f0f0"></div>
<div class="a" style="left:1882px;top:499px;width:15px;height:320px;background:#cdcdcd"></div>
<svg style="left:1884px;top:487px" width="10" height="6"><path d="M0.8 5.2 L5 1 L9.2 5.2" fill="none" stroke="#505050" stroke-width="2"/></svg>
<svg style="left:1884px;top:876px" width="10" height="6"><path d="M0.8 0.8 L5 5 L9.2 0.8" fill="none" stroke="#505050" stroke-width="2"/></svg>
<div class="a" style="left:1501px;top:887px;width:396px;height:4px;background:#f0f0f0"></div>
<div class="a" style="left:1501px;top:891px;width:396px;height:1px;background:#8b9097"></div>
<span class="t" style="letter-spacing:-0.05px;left:1504px;top:901px;font-size:11.5px;line-height:11.5px;color:#000;font-weight:bold;">Softkey Frame Left [59]</span>
<div class="a" style="left:1876px;top:897px;width:15px;height:15px;border-radius:50%;background:#a6a6a6"></div>
<span class="t" style="left:1881px;top:901px;font-size:11px;line-height:11px;color:#c8c8c8;font-weight:bold;">?</span>
<div class="a" style="left:1782px;top:959px;width:1px;height:13px;background:#a0a0a0"></div>
<div class="a" style="left:1893px;top:959px;width:1px;height:13px;background:#a0a0a0"></div>
</div>
<!-- paletteicons -->
<div class="sec" id="sec-paletteicons">
<svg style="left:1504px;top:106px" width="32" height="32" viewBox="0 0 32 32"><rect x="1.5" y="4.5" width="29" height="23" fill="#f0f0f0" stroke="#0a0a0a" stroke-width="3"/><rect x="3" y="6" width="16" height="9" fill="#0070c0"/></svg>
<svg style="left:1598px;top:106px" width="32" height="32" viewBox="0 0 32 32"><rect x="0" y="2" width="32" height="9" fill="#0070c0"/><rect x="2" y="12" width="28" height="18" fill="#0a0a0a"/><rect x="10.5" y="18" width="11" height="5" rx="2.5" fill="#f0f0f0"/></svg>
<svg style="left:1504px;top:161px" width="32" height="32" viewBox="0 0 32 32"><path d="M13 3 H27 Q31 3 31 7 V27 Q31 31 27 31 H13" fill="none" stroke="#0a0a0a" stroke-width="2.8"/><path d="M0 13 H12 V8.5 L26.5 17 L12 25.5 V21 H0 Z" fill="#0070c0"/></svg>
<svg style="left:1630px;top:161px" width="32" height="32" viewBox="0 0 32 32"><rect x="0" y="3.5" width="32" height="27" fill="#0a0a0a"/><rect x="1.5" y="7" width="29" height="20" fill="#0070c0"/><text x="16" y="25.5" text-anchor="middle" font-family="Liberation Serif, serif" font-size="23" fill="#fff">T</text></svg>
<svg style="left:1756px;top:161px" width="32" height="32" viewBox="0 0 32 32"><rect x="8.5" y="1.5" width="14" height="13.5" rx="2" fill="#f0f0f0" stroke="#0a0a0a" stroke-width="0.9"/><text x="15.5" y="12.5" text-anchor="middle" font-family="Liberation Sans, sans-serif" font-size="10.5" fill="#0a0a0a">2</text><rect x="0.5" y="18.5" width="13.5" height="13" rx="2" fill="#f0f0f0" stroke="#0a0a0a" stroke-width="0.9"/><text x="7.2" y="29.3" text-anchor="middle" font-family="Liberation Sans, sans-serif" font-size="10.5" fill="#0a0a0a">3</text><rect x="17.5" y="18.5" width="14" height="13" rx="2" fill="#0070c0" stroke="#0a0a0a" stroke-width="0.9"/><text x="24.5" y="29.3" text-anchor="middle" font-family="Liberation Sans, sans-serif" font-size="10.5" fill="#fff">4</text></svg>
<svg style="left:1504px;top:200px" width="32" height="32" viewBox="0 0 32 32"><rect x="1" y="3.5" width="30" height="25" fill="#f0f0f0" stroke="#0a0a0a" stroke-width="2"/><path d="M4 25.5 L11.5 10 L17.5 20.5 L21.5 16 L28 25.5 Z" fill="#0070c0"/><circle cx="25.5" cy="10" r="3" fill="#0a0a0a"/></svg>
<svg style="left:1630px;top:200px" width="32" height="32" viewBox="0 0 32 32"><rect x="1" y="1.5" width="30" height="29" rx="1.5" fill="#f0f0f0" stroke="#0a0a0a" stroke-width="2"/><rect x="1" y="1.5" width="30" height="5.5" fill="#0a0a0a"/><rect x="2" y="14.5" width="28" height="7.5" fill="#0070c0"/><path d="M11 6 V30 M21 6 V30 M2 14.5 H30 M2 22 H30" stroke="#0a0a0a" stroke-width="1.8"/></svg>
<svg style="left:1756px;top:200px" width="32" height="32" viewBox="0 0 32 32"><circle cx="3" cy="7.5" r="2.8" fill="#0a0a0a"/><rect x="8.5" y="5.5" width="23.5" height="4" rx="2" fill="#0a0a0a"/><circle cx="3" cy="16" r="2.8" fill="#0070c0"/><rect x="8.5" y="14" width="23.5" height="4" rx="2" fill="#0070c0"/><circle cx="3" cy="24.5" r="2.8" fill="#0a0a0a"/><rect x="8.5" y="22.5" width="23.5" height="4" rx="2" fill="#0a0a0a"/></svg>
<svg style="left:1504px;top:255px" width="32" height="32" viewBox="0 0 32 32"><path d="M28.93,17.39 A13,13 0 0 1 27.27,22.48" fill="none" stroke="#0070c0" stroke-width="5"/><path d="M25.64,24.72 A13,13 0 0 1 21.31,27.86" fill="none" stroke="#0070c0" stroke-width="5"/><path d="M18.68,28.72 A13,13 0 0 1 13.32,28.72" fill="none" stroke="#0070c0" stroke-width="5"/><path d="M10.69,27.86 A13,13 0 0 1 6.36,24.72" fill="none" stroke="#0070c0" stroke-width="5"/><path d="M4.73,22.48 A13,13 0 0 1 3.07,17.39" fill="none" stroke="#0070c0" stroke-width="5"/><path d="M3.07,14.61 A13,13 0 0 1 4.73,9.52" fill="none" stroke="#0070c0" stroke-width="5"/><path d="M6.36,7.28 A13,13 0 0 1 10.69,4.14" fill="none" stroke="#0070c0" stroke-width="5"/><path d="M13.32,3.28 A13,13 0 0 1 18.68,3.28" fill="none" stroke="#0070c0" stroke-width="5"/><path d="M21.31,4.14 A13,13 0 0 1 25.64,7.28" fill="none" stroke="#0070c0" stroke-width="5"/><path d="M27.27,9.52 A13,13 0 0 1 28.93,14.61" fill="none" stroke="#0070c0" stroke-width="5"/><path d="M10.5,10.5 L19.2,17.2 A3.2,3.2 0 1 1 14.8,21.2 Z" fill="#0a0a0a"/></svg>
<svg style="left:1630px;top:255px" width="32" height="32" viewBox="0 0 32 32"><path d="M28.93,17.39 A13,13 0 0 1 27.27,22.48" fill="none" stroke="#0070c0" stroke-width="5"/><path d="M25.64,24.72 A13,13 0 0 1 21.31,27.86" fill="none" stroke="#0070c0" stroke-width="5"/><path d="M18.68,28.72 A13,13 0 0 1 13.32,28.72" fill="none" stroke="#0070c0" stroke-width="5"/><path d="M10.69,27.86 A13,13 0 0 1 6.36,24.72" fill="none" stroke="#0070c0" stroke-width="5"/><path d="M4.73,22.48 A13,13 0 0 1 3.07,17.39" fill="none" stroke="#0070c0" stroke-width="5"/><path d="M3.07,14.61 A13,13 0 0 1 4.73,9.52" fill="none" stroke="#0070c0" stroke-width="5"/><path d="M6.36,7.28 A13,13 0 0 1 10.69,4.14" fill="none" stroke="#0070c0" stroke-width="5"/><path d="M13.32,3.28 A13,13 0 0 1 18.68,3.28" fill="none" stroke="#0070c0" stroke-width="5"/><path d="M21.31,4.14 A13,13 0 0 1 25.64,7.28" fill="none" stroke="#0070c0" stroke-width="5"/><path d="M27.27,9.52 A13,13 0 0 1 28.93,14.61" fill="none" stroke="#0070c0" stroke-width="5"/><path d="M10.5,10.5 L19.2,17.2 A3.2,3.2 0 1 1 14.8,21.2 Z" fill="#0a0a0a"/></svg>
<svg style="left:1756px;top:255px" width="32" height="32" viewBox="0 0 32 32"><path d="M5.93,24.23 A13,13 0 0 1 3.57,19.80" fill="none" stroke="#0070c0" stroke-width="5"/><path d="M3.06,17.25 A13,13 0 0 1 3.55,12.25" fill="none" stroke="#0070c0" stroke-width="5"/><path d="M4.55,9.85 A13,13 0 0 1 7.73,5.97" fill="none" stroke="#0070c0" stroke-width="5"/><path d="M9.89,4.52 A13,13 0 0 1 14.70,3.07" fill="none" stroke="#0070c0" stroke-width="5"/><path d="M17.30,3.07 A13,13 0 0 1 22.11,4.52" fill="none" stroke="#0070c0" stroke-width="5"/><path d="M24.27,5.97 A13,13 0 0 1 27.45,9.85" fill="none" stroke="#0070c0" stroke-width="5"/><path d="M28.45,12.25 A13,13 0 0 1 28.94,17.25" fill="none" stroke="#0070c0" stroke-width="5"/><path d="M28.43,19.80 A13,13 0 0 1 26.07,24.23" fill="none" stroke="#0070c0" stroke-width="5"/><path d="M10.5,10.5 L19.2,17.2 A3.2,3.2 0 1 1 14.8,21.2 Z" fill="#0a0a0a"/></svg>
<svg style="left:1504px;top:294px" width="32" height="32" viewBox="0 0 32 32"><path d="M2.58,20.56 A13.5,13.5 0 0 1 4.29,15.27" fill="none" stroke="#0070c0" stroke-width="5"/><path d="M5.99,12.95 A13.5,13.5 0 0 1 10.48,9.68" fill="none" stroke="#0070c0" stroke-width="5"/><path d="M13.22,8.79 A13.5,13.5 0 0 1 18.78,8.79" fill="none" stroke="#0070c0" stroke-width="5"/><path d="M21.52,9.68 A13.5,13.5 0 0 1 26.01,12.95" fill="none" stroke="#0070c0" stroke-width="5"/><path d="M27.71,15.27 A13.5,13.5 0 0 1 29.42,20.56" fill="none" stroke="#0070c0" stroke-width="5"/><path d="M10.5,16.5 L19.2,23.2 A3.2,3.2 0 1 1 14.8,27.2 Z" fill="#0a0a0a"/></svg>
<svg style="left:1630px;top:294px" width="32" height="32" viewBox="0 0 32 32"><path d="M7.51,7.72 A14.5,14.5 0 0 1 12.49,7.72" fill="none" stroke="#0070c0" stroke-width="5"/><path d="M14.98,8.38 A14.5,14.5 0 0 1 19.30,10.88" fill="none" stroke="#0070c0" stroke-width="5"/><path d="M21.12,12.70 A14.5,14.5 0 0 1 23.62,17.02" fill="none" stroke="#0070c0" stroke-width="5"/><path d="M24.28,19.51 A14.5,14.5 0 0 1 24.28,24.49" fill="none" stroke="#0070c0" stroke-width="5"/><path d="M5.5,16.0 L14.2,22.7 A3.2,3.2 0 1 1 9.8,26.7 Z" fill="#0a0a0a"/></svg>
<svg style="left:1756px;top:294px" width="32" height="32" viewBox="0 0 32 32"><path d="M1.5 24.5 A14.5 14.5 0 0 1 30.5 24.5 H24 A8 8 0 0 0 8 24.5 Z" fill="#f0f0f0" stroke="#0a0a0a" stroke-width="1.8" stroke-linejoin="round"/><path d="M2.4 23.6 A13.6 13.6 0 0 1 16 10.9 V17.4 A7 7 0 0 0 8.8 23.6 Z" fill="#0070c0"/></svg>
<svg style="left:1504px;top:333px" width="32" height="32" viewBox="0 0 32 32"><path d="M1.5 0.5 V30.5 H32" fill="none" stroke="#0a0a0a" stroke-width="2"/><rect x="4.5" y="14" width="7.5" height="15" fill="#0a0a0a"/><rect x="13.5" y="3.5" width="7.5" height="25.5" fill="#0070c0"/><rect x="22.5" y="8" width="7.5" height="21" fill="#0a0a0a"/></svg>
<svg style="left:1630px;top:333px" width="32" height="32" viewBox="0 0 32 32"><path d="M1.5 2 V30.5 H33" fill="none" stroke="#0a0a0a" stroke-width="2"/><path d="M5.5 22.5 L12 15 L19.5 19 L28 8" fill="none" stroke="#0070c0" stroke-width="3"/><path d="M23 8.5 L31.5 4.5 L30 14 Z" fill="#0070c0"/></svg>
<svg style="left:1504px;top:388px" width="32" height="32" viewBox="0 0 32 32"><path d="M0 8.5 H10 M0 13.5 H10 M0 18.5 H10 M0 23.5 H10" stroke="#0a0a0a" stroke-width="1.3"/><path d="M12 6 H21 A10 10 0 0 1 21 26 H12 Z M18 6 V26" fill="none" stroke="#0070c0" stroke-width="1.8"/></svg>
<svg style="left:1630px;top:388px" width="32" height="32" viewBox="0 0 32 32"><path d="M9.8 6 A13.3 13.3 0 1 0 23.2 6" fill="none" stroke="#0070c0" stroke-width="2.6"/><path d="M16.5 -1 V13.5" stroke="#0a0a0a" stroke-width="2.4"/></svg>
<svg style="left:1756px;top:388px" width="32" height="32" viewBox="0 0 32 32"><circle cx="16" cy="16" r="14.2" fill="none" stroke="#0070c0" stroke-width="3.4"/><circle cx="16" cy="16" r="8.2" fill="#0a0a0a"/></svg>
</div>
<!-- overlays -->
<div class="sec" id="sec-overlays">
<div class="a" style="left:212px;top:313px;width:198px;height:181px;background:#f2f2f2;border:1px solid #a0a0a0"></div>
<div class="a" style="left:213px;top:314px;width:30px;height:179px;background:#f0f0f0"></div>
<div class="a" style="left:215px;top:316px;width:193px;height:22px;background:#91c9f7"></div>
<span class="t" style="letter-spacing:-0.28px;left:245px;top:322px;font-size:12px;line-height:12px;color:#000;">Create Softkey Level</span>
<span class="t" style="letter-spacing:-0.25px;left:245px;top:344px;font-size:12px;line-height:12px;color:#6d6d6d;">Softkey Level</span>
<svg style="left:401px;top:345px" width="5" height="8"><path d="M0.5 0.5 L4 4 L0.5 7.5" fill="none" stroke="#6d6d6d" stroke-width="1"/></svg>
<span class="t" style="letter-spacing:-0.34px;left:245px;top:366px;font-size:12px;line-height:12px;color:#000;">Delete</span>
<span class="t" style="letter-spacing:-0.01px;left:245px;top:388px;font-size:12px;line-height:12px;color:#000;">Copy</span>
<span class="t" style="letter-spacing:-0.67px;left:245px;top:410px;font-size:12px;line-height:12px;color:#6d6d6d;">Paste</span>
<span class="t" style="letter-spacing:0.06px;left:360px;top:410px;font-size:12px;line-height:12px;color:#6d6d6d;">Ctrl+V</span>
<span class="t" style="letter-spacing:0.16px;left:245px;top:432px;font-size:12px;line-height:12px;color:#000;">Cut</span>
<span class="t" style="letter-spacing:-0.2px;left:245px;top:454px;font-size:12px;line-height:12px;color:#000;">ZOrder</span>
<svg style="left:401px;top:455px" width="5" height="8"><path d="M0.5 0.5 L4 4 L0.5 7.5" fill="none" stroke="#333" stroke-width="1"/></svg>
<span class="t" style="letter-spacing:0.1px;left:245px;top:476px;font-size:12px;line-height:12px;color:#000;">Hide</span>
<div class="a" style="left:586px;top:249px;width:198px;height:182px;background:#f2f2f2;border:1px solid #a0a0a0"></div>
<div class="a" style="left:587px;top:250px;width:30px;height:180px;background:#f0f0f0"></div>
<div class="a" style="left:589px;top:252px;width:193px;height:22px;background:#91c9f7"></div>
<span class="t" style="letter-spacing:-0.28px;left:620px;top:258px;font-size:12px;line-height:12px;color:#000;">Create Softkey Level</span>
<span class="t" style="letter-spacing:-0.25px;left:620px;top:280px;font-size:12px;line-height:12px;color:#6d6d6d;">Softkey Level</span>
<svg style="left:775px;top:281px" width="5" height="8"><path d="M0.5 0.5 L4 4 L0.5 7.5" fill="none" stroke="#6d6d6d" stroke-width="1"/></svg>
<span class="t" style="letter-spacing:-0.34px;left:620px;top:302px;font-size:12px;line-height:12px;color:#000;">Delete</span>
<span class="t" style="letter-spacing:-0.01px;left:620px;top:324px;font-size:12px;line-height:12px;color:#000;">Copy</span>
<span class="t" style="letter-spacing:-0.67px;left:620px;top:346px;font-size:12px;line-height:12px;color:#6d6d6d;">Paste</span>
<span class="t" style="letter-spacing:0.06px;left:735px;top:346px;font-size:12px;line-height:12px;color:#6d6d6d;">Ctrl+V</span>
<span class="t" style="letter-spacing:0.16px;left:620px;top:368px;font-size:12px;line-height:12px;color:#000;">Cut</span>
<span class="t" style="letter-spacing:-0.2px;left:620px;top:390px;font-size:12px;line-height:12px;color:#000;">ZOrder</span>
<svg style="left:775px;top:391px" width="5" height="8"><path d="M0.5 0.5 L4 4 L0.5 7.5" fill="none" stroke="#333" stroke-width="1"/></svg>
<span class="t" style="letter-spacing:0.1px;left:620px;top:412px;font-size:12px;line-height:12px;color:#000;">Hide</span>
<div class="a" style="left:253px;top:281px;width:28px;height:28px;border-radius:50%;background:radial-gradient(circle at 50% 45%,#f02424 0%,#e81e1e 60%,#d41818 100%);box-shadow:0 1px 4px rgba(0,0,0,0.35)"></div><span class="t" style="letter-spacing:1.06px;left:258.4px;top:289.3px;font-size:14.5px;line-height:14.5px;color:#fff;font-weight:bold;">56</span>
<div class="a" style="left:562px;top:219px;width:28px;height:28px;border-radius:50%;background:radial-gradient(circle at 50% 45%,#cc1010 0%,#c40c0c 60%,#b00808 100%);box-shadow:0 1px 4px rgba(0,0,0,0.35)"></div><span class="t" style="letter-spacing:1.06px;left:567.4px;top:227.3px;font-size:14.5px;line-height:14.5px;color:#fff;font-weight:bold;">57</span>
</div>
</body>
</html>
